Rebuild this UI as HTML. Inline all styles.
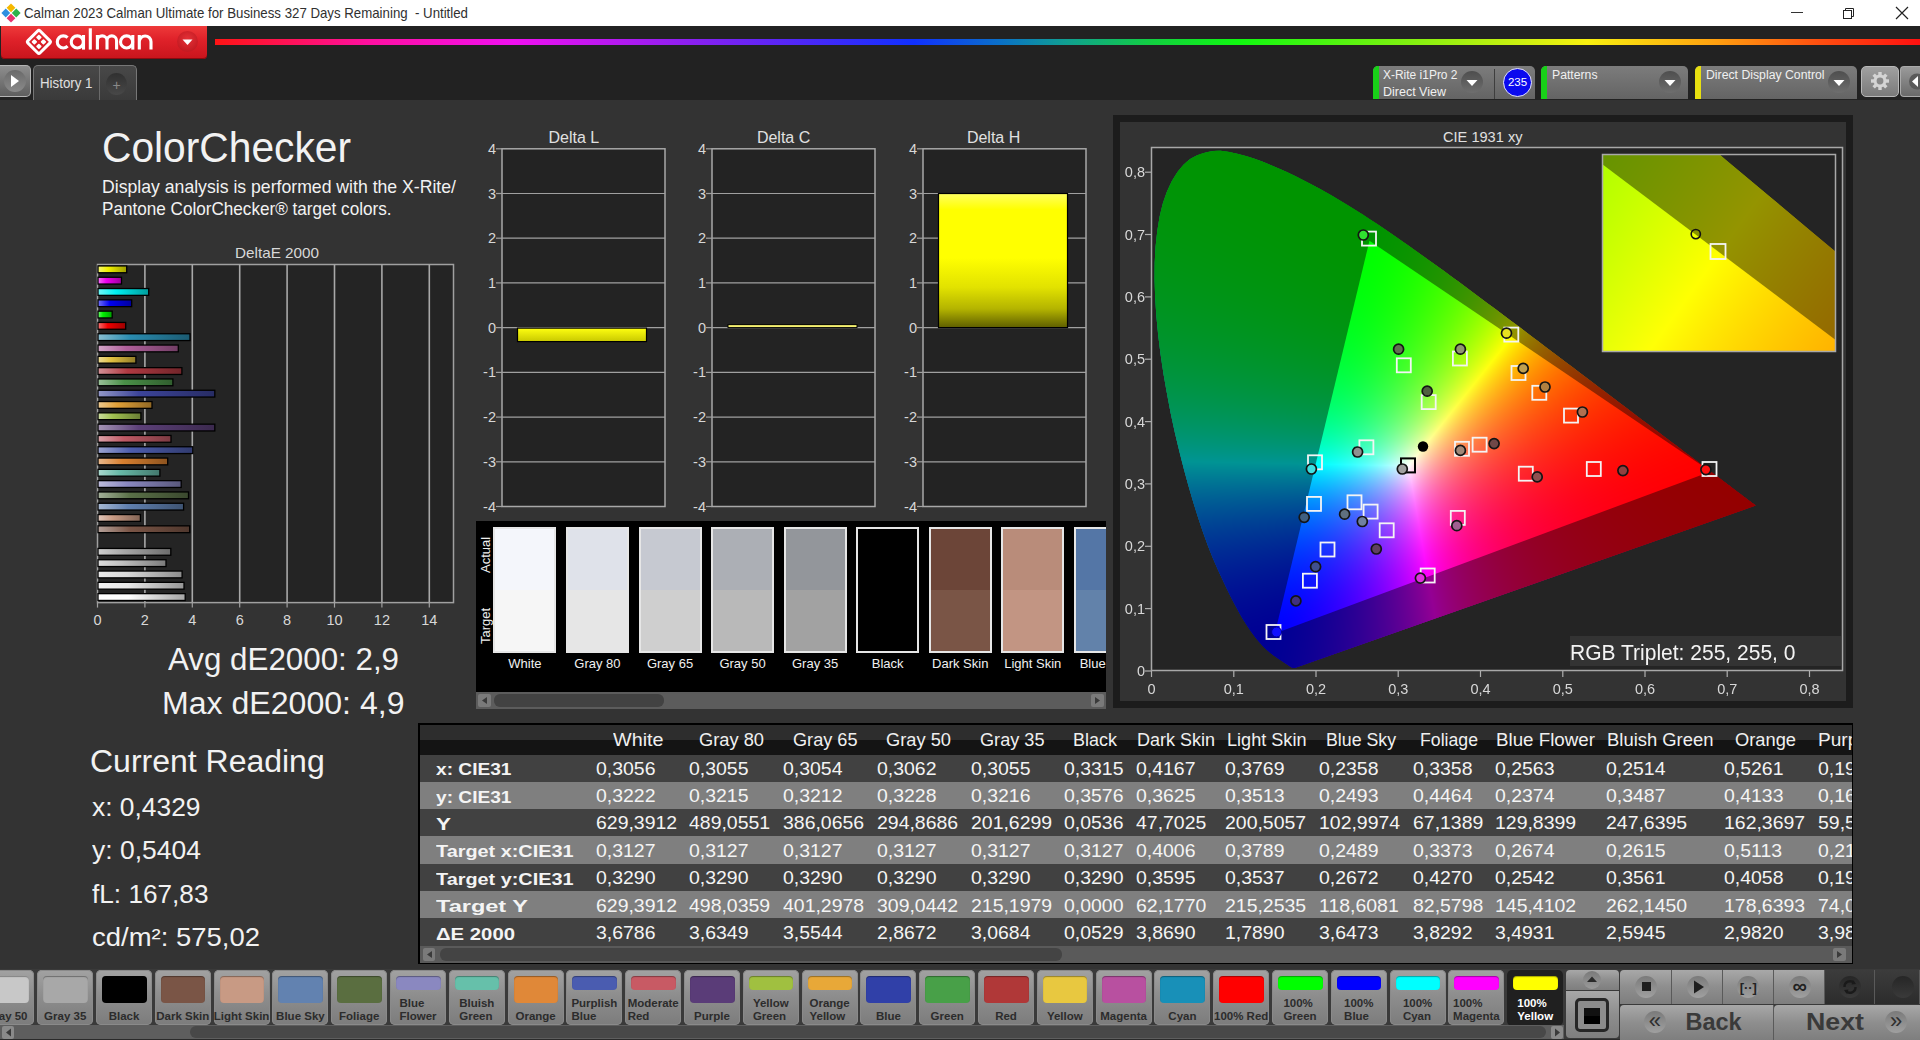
<!DOCTYPE html>
<html><head><meta charset="utf-8"><style>
html,body{margin:0;padding:0;width:1920px;height:1040px;overflow:hidden;background:#333333;}
body{position:relative;font-family:"Liberation Sans",sans-serif;}
.t{position:absolute;white-space:nowrap;}
.r{position:absolute;}
</style></head><body>
<div class="r" style="left:0px;top:0px;width:1920px;height:26px;background:#fff"></div><svg class="r" style="left:1px;top:3px" width="20" height="20" viewBox="0 0 20 20">
<g transform="rotate(45 10 10)">
<rect x="3.2" y="3.2" width="6.2" height="6.2" fill="#f5b800"/>
<rect x="10.6" y="3.2" width="6.2" height="6.2" fill="#2db34a"/>
<rect x="3.2" y="10.6" width="6.2" height="6.2" fill="#2f8fe0"/>
<rect x="10.6" y="10.6" width="6.2" height="6.2" fill="#e8336d"/>
</g></svg><div class="t" style="left:23.50px;top:6.23px;font-size:14.5px;line-height:14.5px;color:#303030;transform:scaleX(0.9136);transform-origin:0 0;white-space:pre;">Calman 2023 Calman Ultimate for Business 327 Days Remaining  - Untitled</div><div class="r" style="left:1791px;top:12px;width:12px;height:1px;background:#333"></div><svg class="r" style="left:1840px;top:5px" width="16" height="16" viewBox="0 0 16 16">
<rect x="3.5" y="5.5" width="8" height="8" fill="none" stroke="#222" stroke-width="1"/>
<path d="M5.5 5.5 V3.5 H13.5 V11.5 H11.5" fill="none" stroke="#222" stroke-width="1"/></svg><svg class="r" style="left:1894px;top:5px" width="16" height="16" viewBox="0 0 16 16">
<path d="M2 2 L14 14 M14 2 L2 14" stroke="#222" stroke-width="1.2"/></svg><div class="r" style="left:0px;top:26px;width:1920px;height:74px;background:#222222"></div><div class="r" style="left:1px;top:26px;width:206px;height:33px;background:linear-gradient(#ee3a3a 0%,#e0222a 40%,#c8141c 100%);border-radius:0 0 4px 4px;box-shadow:inset 0 -1px 0 #8a0a10"></div><svg class="r" style="left:0;top:0" width="60" height="60" viewBox="0 0 60 60">
<g transform="translate(38.9 41.9) rotate(45)">
<rect x="-8.6" y="-8.6" width="17.2" height="17.2" rx="1.8" fill="none" stroke="#fff" stroke-width="3"/>
<rect x="-5.3" y="-5.3" width="4.2" height="4.2" rx="0.8" fill="#fff"/>
<rect x="1.1" y="-5.3" width="4.2" height="4.2" rx="0.8" fill="#fff"/>
<rect x="-5.3" y="1.1" width="4.2" height="4.2" rx="0.8" fill="#fff"/>
<rect x="1.1" y="1.1" width="4.2" height="4.2" rx="0.8" fill="#fff"/>
</g></svg><svg class="r" style="left:0;top:0" width="210" height="62" viewBox="0 0 210 62">
<g fill="none" stroke="#fff" stroke-width="3.1">
<path d="M67.6 37.6 A6.05 6.05 0 1 0 67.6 46.2"/>
<circle cx="77.3" cy="41.9" r="6.05"/><path d="M83.5 35 V49.6"/>
<path d="M90.3 28.3 V49.6"/>
<path d="M97.4 35 V49.6 M97.4 40.7 A4.8 4.8 0 0 1 107 40.7 V49.6 M107 40.7 A4.8 4.8 0 0 1 116.6 40.7 V49.6"/>
<circle cx="126.6" cy="41.9" r="6.05"/><path d="M132.8 35 V49.6"/>
<path d="M139.3 35 V49.6 M139.3 41.8 A5.85 5.85 0 0 1 151 41.8 V49.6"/>
</g></svg><div class="r" style="left:177px;top:31px;width:21px;height:21px;border-radius:50%;background:radial-gradient(circle at 50% 40%,#e53238,#b8121a)"></div><svg class="r" style="left:181px;top:37px" width="13" height="10" viewBox="0 0 13 10"><path d="M1.5 2.5 L11.5 2.5 L6.5 8 Z" fill="#fff"/></svg><div class="r" style="left:215px;top:39px;width:1705px;height:6px;background:linear-gradient(to right,#ff1414 0%,#ff10a0 9%,#f010f0 17.5%,#8a20f0 28%,#1030ff 41%,#0a70c8 46%,#10a090 50%,#12d040 55%,#10f810 60%,#80f010 70%,#f8f010 80.5%,#ffa010 88%,#ff5010 94%,#ff1010 100%)"></div><div class="r" style="left:0px;top:65px;width:31px;height:32px;background:linear-gradient(#8e8e8e,#5e5e5e);border-radius:0 5px 5px 0;border:1.5px solid #b4b4b4;border-left:none;box-sizing:border-box"></div><div class="r" style="left:4px;top:70px;width:22px;height:22px;border-radius:50%;background:linear-gradient(#6a6a6a,#8a8a8a)"></div><svg class="r" style="left:10px;top:74px" width="10" height="14" viewBox="0 0 10 14"><path d="M1 1 L9 7 L1 13 Z" fill="#fff"/></svg><div class="r" style="left:33px;top:65px;width:104px;height:35px;background:linear-gradient(#484848,#3a3a3a);border-radius:5px 5px 0 0;border:1.5px solid #777;border-bottom:none;box-sizing:border-box"></div><div class="r" style="left:98.5px;top:66px;width:1.5px;height:34px;background:#6a6a6a"></div><div class="r" style="left:106px;top:73px;width:21px;height:22px;border-radius:50%;background:linear-gradient(#303030,#484848)"></div><div class="t" style="left:112.41px;top:78.15px;font-size:14px;line-height:14px;color:#8a8a8a;">+</div><div class="t" style="left:40.00px;top:76.23px;font-size:14.5px;line-height:14.5px;color:#e0e0e0;transform:scaleX(0.9177);transform-origin:0 0;">History 1</div><div class="r" style="left:1373px;top:66px;width:162px;height:33px;background:linear-gradient(#7c7c7c,#646464);border-radius:5px 5px 0 0"></div><div class="r" style="left:1373px;top:66px;width:6px;height:33px;background:#18d018;border-radius:5px 0 0 0"></div><div class="r" style="left:1461px;top:71px;width:22px;height:22px;border-radius:50%;background:linear-gradient(#4e4e4e,#6e6e6e)"></div><svg class="r" style="left:1466px;top:79px" width="12" height="8" viewBox="0 0 12 8"><path d="M0.5 1 L11.5 1 L6 7 Z" fill="#fff"/></svg><div class="r" style="left:1494px;top:69px;width:1px;height:30px;background:#3e3e3e"></div><div class="r" style="left:1503px;top:68px;width:29px;height:29px;border-radius:50%;background:#0a0aee;border:1.5px solid #e8e8f8;box-sizing:border-box"></div><div class="t" style="left:1507.91px;top:77.27px;font-size:11.5px;line-height:11.5px;color:#fff;">235</div><div class="t" style="left:1383.00px;top:69.42px;font-size:12.5px;line-height:12.5px;color:#f0f0f0;transform:scaleX(0.9575);transform-origin:0 0;">X-Rite i1Pro 2</div><div class="t" style="left:1383.00px;top:85.92px;font-size:12.5px;line-height:12.5px;color:#f0f0f0;">Direct View</div><div class="r" style="left:1541px;top:66px;width:147px;height:33px;background:linear-gradient(#7c7c7c,#646464);border-radius:5px 5px 0 0"></div><div class="r" style="left:1541px;top:66px;width:6px;height:33px;background:#18d018;border-radius:5px 0 0 0"></div><div class="r" style="left:1659px;top:71px;width:22px;height:22px;border-radius:50%;background:linear-gradient(#4e4e4e,#6e6e6e)"></div><svg class="r" style="left:1664px;top:79px" width="12" height="8" viewBox="0 0 12 8"><path d="M0.5 1 L11.5 1 L6 7 Z" fill="#fff"/></svg><div class="t" style="left:1551.50px;top:69.42px;font-size:12.5px;line-height:12.5px;color:#f0f0f0;transform:scaleX(0.9774);transform-origin:0 0;">Patterns</div><div class="r" style="left:1695px;top:66px;width:162px;height:33px;background:linear-gradient(#7c7c7c,#646464);border-radius:5px 5px 0 0"></div><div class="r" style="left:1695px;top:66px;width:6px;height:33px;background:#e8e010;border-radius:5px 0 0 0"></div><div class="r" style="left:1828px;top:71px;width:22px;height:22px;border-radius:50%;background:linear-gradient(#4e4e4e,#6e6e6e)"></div><svg class="r" style="left:1833px;top:79px" width="12" height="8" viewBox="0 0 12 8"><path d="M0.5 1 L11.5 1 L6 7 Z" fill="#fff"/></svg><div class="t" style="left:1705.50px;top:69.42px;font-size:12.5px;line-height:12.5px;color:#f0f0f0;transform:scaleX(0.9804);transform-origin:0 0;">Direct Display Control</div><div class="r" style="left:1861px;top:66px;width:38px;height:31px;background:linear-gradient(#a0a0a0,#7a7a7a);border-radius:5px;border:1.5px solid #b8b8b8;box-sizing:border-box"></div><svg class="r" style="left:1869px;top:70px" width="22" height="22" viewBox="0 0 22 22">
<g fill="#d4d4d4"><circle cx="11" cy="11" r="6.5"/>
<g id="tooth"><rect x="9.3" y="2" width="3.4" height="4"/></g>
<use href="#tooth" transform="rotate(45 11 11)"/><use href="#tooth" transform="rotate(90 11 11)"/><use href="#tooth" transform="rotate(135 11 11)"/>
<use href="#tooth" transform="rotate(180 11 11)"/><use href="#tooth" transform="rotate(225 11 11)"/><use href="#tooth" transform="rotate(270 11 11)"/><use href="#tooth" transform="rotate(315 11 11)"/>
</g><circle cx="11" cy="11" r="3.4" fill="#8a8a8a"/></svg><div class="r" style="left:1900px;top:66px;width:20px;height:31px;background:linear-gradient(#9a9a9a,#6a6a6a);border-radius:4px 0 0 4px;border:1px solid #aaa;border-right:none;box-sizing:border-box"></div><svg class="r" style="left:1905px;top:73px" width="15" height="17" viewBox="0 0 15 17"><circle cx="12" cy="8.5" r="8" fill="#5a5a5a"/><path d="M13 3 L7 8.5 L13 14 Z" fill="#fff"/></svg><div class="t" style="left:102.00px;top:125.60px;font-size:43px;line-height:43px;color:#f2f2f2;transform:scaleX(0.9472);transform-origin:0 0;">ColorChecker</div><div class="t" style="left:102.00px;top:178.34px;font-size:18.5px;line-height:18.5px;color:#f2f2f2;transform:scaleX(0.9537);transform-origin:0 0;">Display analysis is performed with the X-Rite/</div><div class="t" style="left:102.00px;top:200.34px;font-size:18.5px;line-height:18.5px;color:#f2f2f2;transform:scaleX(0.9253);transform-origin:0 0;">Pantone ColorChecker® target colors.</div><div class="t" style="left:234.50px;top:244.80px;font-size:15px;line-height:15px;color:#d8d8d8;transform:scaleX(1.0174);transform-origin:0 0;">DeltaE 2000</div><svg class="r" style="left:0;top:0" width="470" height="640" viewBox="0 0 470 640"><rect x="97.5" y="264.5" width="356.0" height="338.1" fill="#242424" stroke="#a0a0a0" stroke-width="1.5"/><line x1="144.9" y1="264.5" x2="144.9" y2="602.6" stroke="#a8a8a8" stroke-width="1.6"/><line x1="192.3" y1="264.5" x2="192.3" y2="602.6" stroke="#a8a8a8" stroke-width="1.6"/><line x1="239.7" y1="264.5" x2="239.7" y2="602.6" stroke="#a8a8a8" stroke-width="1.6"/><line x1="287.1" y1="264.5" x2="287.1" y2="602.6" stroke="#a8a8a8" stroke-width="1.6"/><line x1="334.5" y1="264.5" x2="334.5" y2="602.6" stroke="#a8a8a8" stroke-width="1.6"/><line x1="381.9" y1="264.5" x2="381.9" y2="602.6" stroke="#a8a8a8" stroke-width="1.6"/><line x1="429.3" y1="264.5" x2="429.3" y2="602.6" stroke="#a8a8a8" stroke-width="1.6"/><defs><linearGradient id="bg0" x1="0" x2="1" y1="0" y2="0"><stop offset="0" stop-color="#f6f672"/><stop offset="0.35" stop-color="#f0f000"/><stop offset="1" stop-color="#9c9c00"/></linearGradient><linearGradient id="bg1" x1="0" x2="1" y1="0" y2="0"><stop offset="0" stop-color="#f672f6"/><stop offset="0.35" stop-color="#f000f0"/><stop offset="1" stop-color="#9c009c"/></linearGradient><linearGradient id="bg2" x1="0" x2="1" y1="0" y2="0"><stop offset="0" stop-color="#72f6f6"/><stop offset="0.35" stop-color="#00f0f0"/><stop offset="1" stop-color="#009c9c"/></linearGradient><linearGradient id="bg3" x1="0" x2="1" y1="0" y2="0"><stop offset="0" stop-color="#7272f6"/><stop offset="0.35" stop-color="#0000f0"/><stop offset="1" stop-color="#00009c"/></linearGradient><linearGradient id="bg4" x1="0" x2="1" y1="0" y2="0"><stop offset="0" stop-color="#72f672"/><stop offset="0.35" stop-color="#00f000"/><stop offset="1" stop-color="#009c00"/></linearGradient><linearGradient id="bg5" x1="0" x2="1" y1="0" y2="0"><stop offset="0" stop-color="#f67272"/><stop offset="0.35" stop-color="#f00000"/><stop offset="1" stop-color="#9c0000"/></linearGradient><linearGradient id="bg6" x1="0" x2="1" y1="0" y2="0"><stop offset="0" stop-color="#89bfd3"/><stop offset="0.35" stop-color="#2a8cb0"/><stop offset="1" stop-color="#1b5b72"/></linearGradient><linearGradient id="bg7" x1="0" x2="1" y1="0" y2="0"><stop offset="0" stop-color="#d3a7c8"/><stop offset="0.35" stop-color="#b0609c"/><stop offset="1" stop-color="#723e65"/></linearGradient><linearGradient id="bg8" x1="0" x2="1" y1="0" y2="0"><stop offset="0" stop-color="#eddc95"/><stop offset="0.35" stop-color="#e0c040"/><stop offset="1" stop-color="#917c29"/></linearGradient><linearGradient id="bg9" x1="0" x2="1" y1="0" y2="0"><stop offset="0" stop-color="#d39297"/><stop offset="0.35" stop-color="#b03a42"/><stop offset="1" stop-color="#72252a"/></linearGradient><linearGradient id="bg10" x1="0" x2="1" y1="0" y2="0"><stop offset="0" stop-color="#9bc19a"/><stop offset="0.35" stop-color="#4a9048"/><stop offset="1" stop-color="#305d2e"/></linearGradient><linearGradient id="bg11" x1="0" x2="1" y1="0" y2="0"><stop offset="0" stop-color="#9398c7"/><stop offset="0.35" stop-color="#3c449a"/><stop offset="1" stop-color="#272c64"/></linearGradient><linearGradient id="bg12" x1="0" x2="1" y1="0" y2="0"><stop offset="0" stop-color="#edca91"/><stop offset="0.35" stop-color="#e0a038"/><stop offset="1" stop-color="#916824"/></linearGradient><linearGradient id="bg13" x1="0" x2="1" y1="0" y2="0"><stop offset="0" stop-color="#cadc9e"/><stop offset="0.35" stop-color="#a0c050"/><stop offset="1" stop-color="#687c34"/></linearGradient><linearGradient id="bg14" x1="0" x2="1" y1="0" y2="0"><stop offset="0" stop-color="#a595b4"/><stop offset="0.35" stop-color="#5c4078"/><stop offset="1" stop-color="#3b294e"/></linearGradient><linearGradient id="bg15" x1="0" x2="1" y1="0" y2="0"><stop offset="0" stop-color="#dca4aa"/><stop offset="0.35" stop-color="#c05a66"/><stop offset="1" stop-color="#7c3a42"/></linearGradient><linearGradient id="bg16" x1="0" x2="1" y1="0" y2="0"><stop offset="0" stop-color="#9ca5d1"/><stop offset="0.35" stop-color="#4c5cac"/><stop offset="1" stop-color="#313b6f"/></linearGradient><linearGradient id="bg17" x1="0" x2="1" y1="0" y2="0"><stop offset="0" stop-color="#e9b98d"/><stop offset="0.35" stop-color="#d88030"/><stop offset="1" stop-color="#8c531f"/></linearGradient><linearGradient id="bg18" x1="0" x2="1" y1="0" y2="0"><stop offset="0" stop-color="#abd9cf"/><stop offset="0.35" stop-color="#68baa8"/><stop offset="1" stop-color="#43786d"/></linearGradient><linearGradient id="bg19" x1="0" x2="1" y1="0" y2="0"><stop offset="0" stop-color="#bebddc"/><stop offset="0.35" stop-color="#8a88c0"/><stop offset="1" stop-color="#59587c"/></linearGradient><linearGradient id="bg20" x1="0" x2="1" y1="0" y2="0"><stop offset="0" stop-color="#a4b09a"/><stop offset="0.35" stop-color="#5a7048"/><stop offset="1" stop-color="#3a482e"/></linearGradient><linearGradient id="bg21" x1="0" x2="1" y1="0" y2="0"><stop offset="0" stop-color="#a7b9d3"/><stop offset="0.35" stop-color="#6080b0"/><stop offset="1" stop-color="#3e5372"/></linearGradient><linearGradient id="bg22" x1="0" x2="1" y1="0" y2="0"><stop offset="0" stop-color="#e0c7bb"/><stop offset="0.35" stop-color="#c89a84"/><stop offset="1" stop-color="#826455"/></linearGradient><linearGradient id="bg23" x1="0" x2="1" y1="0" y2="0"><stop offset="0" stop-color="#b5a199"/><stop offset="0.35" stop-color="#7a5546"/><stop offset="1" stop-color="#4f372d"/></linearGradient><linearGradient id="bg24" x1="0" x2="1" y1="0" y2="0"><stop offset="0" stop-color="#727272"/><stop offset="0.35" stop-color="#000000"/><stop offset="1" stop-color="#000000"/></linearGradient><linearGradient id="bg25" x1="0" x2="1" y1="0" y2="0"><stop offset="0" stop-color="#cfcfcf"/><stop offset="0.35" stop-color="#a8a8a8"/><stop offset="1" stop-color="#6d6d6d"/></linearGradient><linearGradient id="bg26" x1="0" x2="1" y1="0" y2="0"><stop offset="0" stop-color="#dcdcdc"/><stop offset="0.35" stop-color="#c0c0c0"/><stop offset="1" stop-color="#7c7c7c"/></linearGradient><linearGradient id="bg27" x1="0" x2="1" y1="0" y2="0"><stop offset="0" stop-color="#e9e9e9"/><stop offset="0.35" stop-color="#d8d8d8"/><stop offset="1" stop-color="#8c8c8c"/></linearGradient><linearGradient id="bg28" x1="0" x2="1" y1="0" y2="0"><stop offset="0" stop-color="#f2f2f2"/><stop offset="0.35" stop-color="#e8e8e8"/><stop offset="1" stop-color="#969696"/></linearGradient><linearGradient id="bg29" x1="0" x2="1" y1="0" y2="0"><stop offset="0" stop-color="#ffffff"/><stop offset="0.35" stop-color="#ffffff"/><stop offset="1" stop-color="#a5a5a5"/></linearGradient></defs><rect x="98.0" y="265.95" width="28.7" height="6.8" fill="url(#bg0)" stroke="#000" stroke-width="1.3"/><rect x="98.0" y="277.25" width="23.5" height="6.8" fill="url(#bg1)" stroke="#000" stroke-width="1.3"/><rect x="98.0" y="288.55" width="50.7" height="6.8" fill="url(#bg2)" stroke="#000" stroke-width="1.3"/><rect x="98.0" y="299.85" width="33.7" height="6.8" fill="url(#bg3)" stroke="#000" stroke-width="1.3"/><rect x="98.0" y="311.15" width="14.2" height="6.8" fill="url(#bg4)" stroke="#000" stroke-width="1.3"/><rect x="98.0" y="322.45" width="27.7" height="6.8" fill="url(#bg5)" stroke="#000" stroke-width="1.3"/><rect x="98.0" y="333.75" width="92.0" height="6.8" fill="url(#bg6)" stroke="#000" stroke-width="1.3"/><rect x="98.0" y="345.05" width="80.3" height="6.8" fill="url(#bg7)" stroke="#000" stroke-width="1.3"/><rect x="98.0" y="356.35" width="37.9" height="6.8" fill="url(#bg8)" stroke="#000" stroke-width="1.3"/><rect x="98.0" y="367.65" width="83.9" height="6.8" fill="url(#bg9)" stroke="#000" stroke-width="1.3"/><rect x="98.0" y="378.95" width="74.9" height="6.8" fill="url(#bg10)" stroke="#000" stroke-width="1.3"/><rect x="98.0" y="390.25" width="116.8" height="6.8" fill="url(#bg11)" stroke="#000" stroke-width="1.3"/><rect x="98.0" y="401.55" width="54.0" height="6.8" fill="url(#bg12)" stroke="#000" stroke-width="1.3"/><rect x="98.0" y="412.85" width="42.9" height="6.8" fill="url(#bg13)" stroke="#000" stroke-width="1.3"/><rect x="98.0" y="424.15" width="116.8" height="6.8" fill="url(#bg14)" stroke="#000" stroke-width="1.3"/><rect x="98.0" y="435.45" width="73.0" height="6.8" fill="url(#bg15)" stroke="#000" stroke-width="1.3"/><rect x="98.0" y="446.75" width="94.8" height="6.8" fill="url(#bg16)" stroke="#000" stroke-width="1.3"/><rect x="98.0" y="458.05" width="69.7" height="6.8" fill="url(#bg17)" stroke="#000" stroke-width="1.3"/><rect x="98.0" y="469.35" width="61.9" height="6.8" fill="url(#bg18)" stroke="#000" stroke-width="1.3"/><rect x="98.0" y="480.65" width="83.2" height="6.8" fill="url(#bg19)" stroke="#000" stroke-width="1.3"/><rect x="98.0" y="491.95" width="90.5" height="6.8" fill="url(#bg20)" stroke="#000" stroke-width="1.3"/><rect x="98.0" y="503.25" width="85.6" height="6.8" fill="url(#bg21)" stroke="#000" stroke-width="1.3"/><rect x="98.0" y="514.55" width="42.4" height="6.8" fill="url(#bg22)" stroke="#000" stroke-width="1.3"/><rect x="98.0" y="525.85" width="91.7" height="6.8" fill="url(#bg23)" stroke="#000" stroke-width="1.3"/><rect x="98.0" y="548.45" width="72.8" height="6.8" fill="url(#bg25)" stroke="#000" stroke-width="1.3"/><rect x="98.0" y="559.75" width="68.0" height="6.8" fill="url(#bg26)" stroke="#000" stroke-width="1.3"/><rect x="98.0" y="571.05" width="84.1" height="6.8" fill="url(#bg27)" stroke="#000" stroke-width="1.3"/><rect x="98.0" y="582.35" width="86.0" height="6.8" fill="url(#bg28)" stroke="#000" stroke-width="1.3"/><rect x="98.0" y="593.65" width="87.2" height="6.8" fill="url(#bg29)" stroke="#000" stroke-width="1.3"/><line x1="97.5" y1="602.6" x2="97.5" y2="607.6" stroke="#a0a0a0" stroke-width="1.2"/><line x1="144.9" y1="602.6" x2="144.9" y2="607.6" stroke="#a0a0a0" stroke-width="1.2"/><line x1="192.3" y1="602.6" x2="192.3" y2="607.6" stroke="#a0a0a0" stroke-width="1.2"/><line x1="239.7" y1="602.6" x2="239.7" y2="607.6" stroke="#a0a0a0" stroke-width="1.2"/><line x1="287.1" y1="602.6" x2="287.1" y2="607.6" stroke="#a0a0a0" stroke-width="1.2"/><line x1="334.5" y1="602.6" x2="334.5" y2="607.6" stroke="#a0a0a0" stroke-width="1.2"/><line x1="381.9" y1="602.6" x2="381.9" y2="607.6" stroke="#a0a0a0" stroke-width="1.2"/><line x1="429.3" y1="602.6" x2="429.3" y2="607.6" stroke="#a0a0a0" stroke-width="1.2"/></svg><div class="t" style="left:93.47px;top:613.23px;font-size:14.5px;line-height:14.5px;color:#d8d8d8;">0</div><div class="t" style="left:140.87px;top:613.23px;font-size:14.5px;line-height:14.5px;color:#d8d8d8;">2</div><div class="t" style="left:188.27px;top:613.23px;font-size:14.5px;line-height:14.5px;color:#d8d8d8;">4</div><div class="t" style="left:235.67px;top:613.23px;font-size:14.5px;line-height:14.5px;color:#d8d8d8;">6</div><div class="t" style="left:283.07px;top:613.23px;font-size:14.5px;line-height:14.5px;color:#d8d8d8;">8</div><div class="t" style="left:326.44px;top:613.23px;font-size:14.5px;line-height:14.5px;color:#d8d8d8;">10</div><div class="t" style="left:373.84px;top:613.23px;font-size:14.5px;line-height:14.5px;color:#d8d8d8;">12</div><div class="t" style="left:421.24px;top:613.23px;font-size:14.5px;line-height:14.5px;color:#d8d8d8;">14</div><div class="t" style="left:167.50px;top:644.26px;font-size:31px;line-height:31px;color:#f2f2f2;transform:scaleX(1.0102);transform-origin:0 0;">Avg dE2000: 2,9</div><div class="t" style="left:161.50px;top:688.26px;font-size:31px;line-height:31px;color:#f2f2f2;transform:scaleX(1.0346);transform-origin:0 0;">Max dE2000: 4,9</div><div class="t" style="left:90.00px;top:745.76px;font-size:31px;line-height:31px;color:#f2f2f2;transform:scaleX(1.0318);transform-origin:0 0;">Current Reading</div><div class="t" style="left:92.00px;top:795.04px;font-size:25px;line-height:25px;color:#f2f2f2;transform:scaleX(1.0549);transform-origin:0 0;">x: 0,4329</div><div class="t" style="left:92.00px;top:838.44px;font-size:25px;line-height:25px;color:#f2f2f2;transform:scaleX(1.0597);transform-origin:0 0;">y: 0,5404</div><div class="t" style="left:92.00px;top:881.54px;font-size:25px;line-height:25px;color:#f2f2f2;transform:scaleX(1.0476);transform-origin:0 0;">fL: 167,83</div><div class="t" style="left:92.00px;top:925.34px;font-size:25px;line-height:25px;color:#f2f2f2;transform:scaleX(1.0990);transform-origin:0 0;">cd/m²: 575,02</div><svg class="r" style="left:0;top:0" width="1110" height="520" viewBox="0 0 1110 520"><defs><linearGradient id="ylL" x1="0" x2="0" y1="0" y2="1"><stop offset="0" stop-color="#ffff10"/><stop offset="1" stop-color="#c8c800"/></linearGradient><linearGradient id="ylH" x1="0" x2="0" y1="0" y2="1"><stop offset="0" stop-color="#ffff60"/><stop offset="0.12" stop-color="#ffff00"/><stop offset="0.48" stop-color="#ffff00"/><stop offset="0.7" stop-color="#e2e200"/><stop offset="0.86" stop-color="#b4b400"/><stop offset="1" stop-color="#5e5e00"/></linearGradient></defs><rect x="502" y="148.8" width="163" height="357.7" fill="#232323" stroke="#a8a8a8" stroke-width="1.5"/><line x1="502" y1="193.5" x2="665" y2="193.5" stroke="#a0a0a0" stroke-width="1.2"/><line x1="502" y1="238.2" x2="665" y2="238.2" stroke="#a0a0a0" stroke-width="1.2"/><line x1="502" y1="282.9" x2="665" y2="282.9" stroke="#a0a0a0" stroke-width="1.2"/><line x1="502" y1="327.6" x2="665" y2="327.6" stroke="#a0a0a0" stroke-width="1.2"/><line x1="502" y1="372.4" x2="665" y2="372.4" stroke="#a0a0a0" stroke-width="1.2"/><line x1="502" y1="417.1" x2="665" y2="417.1" stroke="#a0a0a0" stroke-width="1.2"/><line x1="502" y1="461.8" x2="665" y2="461.8" stroke="#a0a0a0" stroke-width="1.2"/><line x1="496" y1="148.8" x2="502" y2="148.8" stroke="#a0a0a0" stroke-width="1.2"/><line x1="496" y1="193.5" x2="502" y2="193.5" stroke="#a0a0a0" stroke-width="1.2"/><line x1="496" y1="238.2" x2="502" y2="238.2" stroke="#a0a0a0" stroke-width="1.2"/><line x1="496" y1="282.9" x2="502" y2="282.9" stroke="#a0a0a0" stroke-width="1.2"/><line x1="496" y1="327.6" x2="502" y2="327.6" stroke="#a0a0a0" stroke-width="1.2"/><line x1="496" y1="372.4" x2="502" y2="372.4" stroke="#a0a0a0" stroke-width="1.2"/><line x1="496" y1="417.1" x2="502" y2="417.1" stroke="#a0a0a0" stroke-width="1.2"/><line x1="496" y1="461.8" x2="502" y2="461.8" stroke="#a0a0a0" stroke-width="1.2"/><line x1="496" y1="506.5" x2="502" y2="506.5" stroke="#a0a0a0" stroke-width="1.2"/><rect x="712" y="148.8" width="163" height="357.7" fill="#232323" stroke="#a8a8a8" stroke-width="1.5"/><line x1="712" y1="193.5" x2="875" y2="193.5" stroke="#a0a0a0" stroke-width="1.2"/><line x1="712" y1="238.2" x2="875" y2="238.2" stroke="#a0a0a0" stroke-width="1.2"/><line x1="712" y1="282.9" x2="875" y2="282.9" stroke="#a0a0a0" stroke-width="1.2"/><line x1="712" y1="327.6" x2="875" y2="327.6" stroke="#a0a0a0" stroke-width="1.2"/><line x1="712" y1="372.4" x2="875" y2="372.4" stroke="#a0a0a0" stroke-width="1.2"/><line x1="712" y1="417.1" x2="875" y2="417.1" stroke="#a0a0a0" stroke-width="1.2"/><line x1="712" y1="461.8" x2="875" y2="461.8" stroke="#a0a0a0" stroke-width="1.2"/><line x1="706" y1="148.8" x2="712" y2="148.8" stroke="#a0a0a0" stroke-width="1.2"/><line x1="706" y1="193.5" x2="712" y2="193.5" stroke="#a0a0a0" stroke-width="1.2"/><line x1="706" y1="238.2" x2="712" y2="238.2" stroke="#a0a0a0" stroke-width="1.2"/><line x1="706" y1="282.9" x2="712" y2="282.9" stroke="#a0a0a0" stroke-width="1.2"/><line x1="706" y1="327.6" x2="712" y2="327.6" stroke="#a0a0a0" stroke-width="1.2"/><line x1="706" y1="372.4" x2="712" y2="372.4" stroke="#a0a0a0" stroke-width="1.2"/><line x1="706" y1="417.1" x2="712" y2="417.1" stroke="#a0a0a0" stroke-width="1.2"/><line x1="706" y1="461.8" x2="712" y2="461.8" stroke="#a0a0a0" stroke-width="1.2"/><line x1="706" y1="506.5" x2="712" y2="506.5" stroke="#a0a0a0" stroke-width="1.2"/><rect x="923" y="148.8" width="163" height="357.7" fill="#232323" stroke="#a8a8a8" stroke-width="1.5"/><line x1="923" y1="193.5" x2="1086" y2="193.5" stroke="#a0a0a0" stroke-width="1.2"/><line x1="923" y1="238.2" x2="1086" y2="238.2" stroke="#a0a0a0" stroke-width="1.2"/><line x1="923" y1="282.9" x2="1086" y2="282.9" stroke="#a0a0a0" stroke-width="1.2"/><line x1="923" y1="327.6" x2="1086" y2="327.6" stroke="#a0a0a0" stroke-width="1.2"/><line x1="923" y1="372.4" x2="1086" y2="372.4" stroke="#a0a0a0" stroke-width="1.2"/><line x1="923" y1="417.1" x2="1086" y2="417.1" stroke="#a0a0a0" stroke-width="1.2"/><line x1="923" y1="461.8" x2="1086" y2="461.8" stroke="#a0a0a0" stroke-width="1.2"/><line x1="917" y1="148.8" x2="923" y2="148.8" stroke="#a0a0a0" stroke-width="1.2"/><line x1="917" y1="193.5" x2="923" y2="193.5" stroke="#a0a0a0" stroke-width="1.2"/><line x1="917" y1="238.2" x2="923" y2="238.2" stroke="#a0a0a0" stroke-width="1.2"/><line x1="917" y1="282.9" x2="923" y2="282.9" stroke="#a0a0a0" stroke-width="1.2"/><line x1="917" y1="327.6" x2="923" y2="327.6" stroke="#a0a0a0" stroke-width="1.2"/><line x1="917" y1="372.4" x2="923" y2="372.4" stroke="#a0a0a0" stroke-width="1.2"/><line x1="917" y1="417.1" x2="923" y2="417.1" stroke="#a0a0a0" stroke-width="1.2"/><line x1="917" y1="461.8" x2="923" y2="461.8" stroke="#a0a0a0" stroke-width="1.2"/><line x1="917" y1="506.5" x2="923" y2="506.5" stroke="#a0a0a0" stroke-width="1.2"/><rect x="517.5" y="328.1" width="129" height="13.5" fill="url(#ylL)" stroke="#000" stroke-width="1.2"/><rect x="728" y="324.6" width="129" height="3" fill="#f4f070" stroke="#000" stroke-width="1"/><rect x="938.5" y="193.5" width="129" height="134.1" fill="url(#ylH)" stroke="#000" stroke-width="1.2"/></svg><div class="t" style="left:548.55px;top:129.96px;font-size:16px;line-height:16px;color:#e0e0e0;">Delta L</div><div class="t" style="left:487.94px;top:141.83px;font-size:14.5px;line-height:14.5px;color:#d8d8d8;">4</div><div class="t" style="left:487.94px;top:186.54px;font-size:14.5px;line-height:14.5px;color:#d8d8d8;">3</div><div class="t" style="left:487.94px;top:231.25px;font-size:14.5px;line-height:14.5px;color:#d8d8d8;">2</div><div class="t" style="left:487.94px;top:275.96px;font-size:14.5px;line-height:14.5px;color:#d8d8d8;">1</div><div class="t" style="left:487.94px;top:320.68px;font-size:14.5px;line-height:14.5px;color:#d8d8d8;">0</div><div class="t" style="left:483.11px;top:365.39px;font-size:14.5px;line-height:14.5px;color:#d8d8d8;">-1</div><div class="t" style="left:483.11px;top:410.10px;font-size:14.5px;line-height:14.5px;color:#d8d8d8;">-2</div><div class="t" style="left:483.11px;top:454.81px;font-size:14.5px;line-height:14.5px;color:#d8d8d8;">-3</div><div class="t" style="left:483.11px;top:499.53px;font-size:14.5px;line-height:14.5px;color:#d8d8d8;">-4</div><div class="t" style="left:756.92px;top:129.96px;font-size:16px;line-height:16px;color:#e0e0e0;">Delta C</div><div class="t" style="left:697.94px;top:141.83px;font-size:14.5px;line-height:14.5px;color:#d8d8d8;">4</div><div class="t" style="left:697.94px;top:186.54px;font-size:14.5px;line-height:14.5px;color:#d8d8d8;">3</div><div class="t" style="left:697.94px;top:231.25px;font-size:14.5px;line-height:14.5px;color:#d8d8d8;">2</div><div class="t" style="left:697.94px;top:275.96px;font-size:14.5px;line-height:14.5px;color:#d8d8d8;">1</div><div class="t" style="left:697.94px;top:320.68px;font-size:14.5px;line-height:14.5px;color:#d8d8d8;">0</div><div class="t" style="left:693.11px;top:365.39px;font-size:14.5px;line-height:14.5px;color:#d8d8d8;">-1</div><div class="t" style="left:693.11px;top:410.10px;font-size:14.5px;line-height:14.5px;color:#d8d8d8;">-2</div><div class="t" style="left:693.11px;top:454.81px;font-size:14.5px;line-height:14.5px;color:#d8d8d8;">-3</div><div class="t" style="left:693.11px;top:499.53px;font-size:14.5px;line-height:14.5px;color:#d8d8d8;">-4</div><div class="t" style="left:966.92px;top:129.96px;font-size:16px;line-height:16px;color:#e0e0e0;">Delta H</div><div class="t" style="left:908.94px;top:141.83px;font-size:14.5px;line-height:14.5px;color:#d8d8d8;">4</div><div class="t" style="left:908.94px;top:186.54px;font-size:14.5px;line-height:14.5px;color:#d8d8d8;">3</div><div class="t" style="left:908.94px;top:231.25px;font-size:14.5px;line-height:14.5px;color:#d8d8d8;">2</div><div class="t" style="left:908.94px;top:275.96px;font-size:14.5px;line-height:14.5px;color:#d8d8d8;">1</div><div class="t" style="left:908.94px;top:320.68px;font-size:14.5px;line-height:14.5px;color:#d8d8d8;">0</div><div class="t" style="left:904.11px;top:365.39px;font-size:14.5px;line-height:14.5px;color:#d8d8d8;">-1</div><div class="t" style="left:904.11px;top:410.10px;font-size:14.5px;line-height:14.5px;color:#d8d8d8;">-2</div><div class="t" style="left:904.11px;top:454.81px;font-size:14.5px;line-height:14.5px;color:#d8d8d8;">-3</div><div class="t" style="left:904.11px;top:499.53px;font-size:14.5px;line-height:14.5px;color:#d8d8d8;">-4</div><div class="r" style="left:476px;top:521px;width:630px;height:171px;background:#000"></div><div class="t" style="left:0.00px;top:-11.00px;font-size:13px;line-height:13px;color:#f0f0f0;left:468px;top:548px;transform:rotate(-90deg);transform-origin:18px 7px;">Actual</div><div class="t" style="left:0.00px;top:-11.00px;font-size:13px;line-height:13px;color:#f0f0f0;left:467px;top:617.5px;transform:rotate(-90deg);transform-origin:19px 7px;">Target</div><div class="r" style="left:493.4px;top:527px;width:63.0px;height:125.5px;overflow:hidden"><div class="r" style="left:0;top:0;width:63px;height:125.5px;box-sizing:border-box;border:2px solid #e6e6e6;background:linear-gradient(#f4f6fb 0,#f4f6fb 50%,#f6f6f6 50%,#f6f6f6 100%)"></div></div><div class="t" style="left:508.28px;top:657.30px;font-size:13px;line-height:13px;color:#f0f0f0;">White</div><div class="r" style="left:565.9px;top:527px;width:63.0px;height:125.5px;overflow:hidden"><div class="r" style="left:0;top:0;width:63px;height:125.5px;box-sizing:border-box;border:2px solid #e6e6e6;background:linear-gradient(#dfe2ea 0,#dfe2ea 50%,#e6e6e6 50%,#e6e6e6 100%)"></div></div><div class="t" style="left:574.33px;top:657.30px;font-size:13px;line-height:13px;color:#f0f0f0;">Gray 80</div><div class="r" style="left:638.5px;top:527px;width:63.0px;height:125.5px;overflow:hidden"><div class="r" style="left:0;top:0;width:63px;height:125.5px;box-sizing:border-box;border:2px solid #e6e6e6;background:linear-gradient(#c6c9d1 0,#c6c9d1 50%,#cfcfcf 50%,#cfcfcf 100%)"></div></div><div class="t" style="left:646.88px;top:657.30px;font-size:13px;line-height:13px;color:#f0f0f0;">Gray 65</div><div class="r" style="left:711.0px;top:527px;width:63.0px;height:125.5px;overflow:hidden"><div class="r" style="left:0;top:0;width:63px;height:125.5px;box-sizing:border-box;border:2px solid #e6e6e6;background:linear-gradient(#acafb5 0,#acafb5 50%,#b9b9b9 50%,#b9b9b9 100%)"></div></div><div class="t" style="left:719.43px;top:657.30px;font-size:13px;line-height:13px;color:#f0f0f0;">Gray 50</div><div class="r" style="left:783.6px;top:527px;width:63.0px;height:125.5px;overflow:hidden"><div class="r" style="left:0;top:0;width:63px;height:125.5px;box-sizing:border-box;border:2px solid #e6e6e6;background:linear-gradient(#93969b 0,#93969b 50%,#a2a2a2 50%,#a2a2a2 100%)"></div></div><div class="t" style="left:791.98px;top:657.30px;font-size:13px;line-height:13px;color:#f0f0f0;">Gray 35</div><div class="r" style="left:856.1px;top:527px;width:63.0px;height:125.5px;overflow:hidden"><div class="r" style="left:0;top:0;width:63px;height:125.5px;box-sizing:border-box;border:2px solid #e6e6e6;background:linear-gradient(#000000 0,#000000 50%,#000000 50%,#000000 100%)"></div></div><div class="t" style="left:871.75px;top:657.30px;font-size:13px;line-height:13px;color:#f0f0f0;">Black</div><div class="r" style="left:928.7px;top:527px;width:63.0px;height:125.5px;overflow:hidden"><div class="r" style="left:0;top:0;width:63px;height:125.5px;box-sizing:border-box;border:2px solid #e6e6e6;background:linear-gradient(#6c4538 0,#6c4538 50%,#7a5546 50%,#7a5546 100%)"></div></div><div class="t" style="left:932.03px;top:657.30px;font-size:13px;line-height:13px;color:#f0f0f0;">Dark Skin</div><div class="r" style="left:1001.2px;top:527px;width:63.0px;height:125.5px;overflow:hidden"><div class="r" style="left:0;top:0;width:63px;height:125.5px;box-sizing:border-box;border:2px solid #e6e6e6;background:linear-gradient(#b98c7a 0,#b98c7a 50%,#c29583 50%,#c29583 100%)"></div></div><div class="t" style="left:1004.20px;top:657.30px;font-size:13px;line-height:13px;color:#f0f0f0;">Light Skin</div><div class="r" style="left:1073.8px;top:527px;width:32.2px;height:125.5px;overflow:hidden"><div class="r" style="left:0;top:0;width:63px;height:125.5px;box-sizing:border-box;border:2px solid #e6e6e6;background:linear-gradient(#5476a6 0,#5476a6 50%,#6282aa 50%,#6282aa 100%)"></div></div><div class="r" style="left:1073.8px;top:650px;width:32.2px;height:30px;overflow:hidden"><div class="t" style="left:5.85px;top:7.00px;font-size:13px;line-height:13px;color:#f0f0f0;">Blue Sky</div></div><div class="r" style="left:476px;top:692px;width:630px;height:17px;background:#5c5c5c"></div><div class="r" style="left:478px;top:694px;width:13px;height:13px;background:#7a7a7a;border-radius:2px"></div><svg class="r" style="left:480px;top:696px" width="9" height="9" viewBox="0 0 9 9"><path d="M7 1 L2 4.5 L7 8 Z" fill="#3a3a3a"/></svg><div class="r" style="left:494px;top:694px;width:170px;height:13px;background:#424242;border-radius:6px"></div><div class="r" style="left:1091px;top:694px;width:13px;height:13px;background:#7a7a7a;border-radius:2px"></div><svg class="r" style="left:1093px;top:696px" width="9" height="9" viewBox="0 0 9 9"><path d="M2 1 L7 4.5 L2 8 Z" fill="#3a3a3a"/></svg><div class="r" style="left:418px;top:723px;width:1435px;height:241px;background:#000"></div><div class="r" style="left:420px;top:725px;width:1432px;height:238px;overflow:hidden"><div class="r" style="left:0px;top:0px;width:1432px;height:15px;background:#2d2d2d"></div><div class="r" style="left:0px;top:15px;width:1432px;height:15px;background:#141414"></div><div class="r" style="left:0;top:29.5px;width:1432px;height:27.3px;background:#414141"></div><div class="r" style="left:0;top:56.8px;width:1432px;height:27.3px;background:#7f7f7f"></div><div class="r" style="left:0;top:84.1px;width:1432px;height:27.3px;background:#414141"></div><div class="r" style="left:0;top:111.4px;width:1432px;height:27.3px;background:#7f7f7f"></div><div class="r" style="left:0;top:138.7px;width:1432px;height:27.3px;background:#414141"></div><div class="r" style="left:0;top:166.0px;width:1432px;height:27.3px;background:#7f7f7f"></div><div class="r" style="left:0;top:193.3px;width:1432px;height:27.3px;background:#414141"></div><div class="t" style="left:192.75px;top:7.09px;font-size:17.5px;line-height:17.5px;color:#f0f0f0;transform:scaleX(1.1289);transform-origin:0 0;">White</div><div class="t" style="left:278.50px;top:7.09px;font-size:17.5px;line-height:17.5px;color:#f0f0f0;transform:scaleX(1.0442);transform-origin:0 0;">Gray 80</div><div class="t" style="left:372.75px;top:7.09px;font-size:17.5px;line-height:17.5px;color:#f0f0f0;transform:scaleX(1.0361);transform-origin:0 0;">Gray 65</div><div class="t" style="left:466.00px;top:7.09px;font-size:17.5px;line-height:17.5px;color:#f0f0f0;transform:scaleX(1.0442);transform-origin:0 0;">Gray 50</div><div class="t" style="left:559.75px;top:7.09px;font-size:17.5px;line-height:17.5px;color:#f0f0f0;transform:scaleX(1.0361);transform-origin:0 0;">Gray 35</div><div class="t" style="left:653.00px;top:7.09px;font-size:17.5px;line-height:17.5px;color:#f0f0f0;transform:scaleX(1.0282);transform-origin:0 0;">Black</div><div class="t" style="left:716.60px;top:7.09px;font-size:17.5px;line-height:17.5px;color:#f0f0f0;transform:scaleX(1.0283);transform-origin:0 0;">Dark Skin</div><div class="t" style="left:807.25px;top:7.09px;font-size:17.5px;line-height:17.5px;color:#f0f0f0;transform:scaleX(1.0344);transform-origin:0 0;">Light Skin</div><div class="t" style="left:906.00px;top:7.09px;font-size:17.5px;line-height:17.5px;color:#f0f0f0;transform:scaleX(1.0136);transform-origin:0 0;">Blue Sky</div><div class="t" style="left:1000.00px;top:7.09px;font-size:17.5px;line-height:17.5px;color:#f0f0f0;transform:scaleX(1.0105);transform-origin:0 0;">Foliage</div><div class="t" style="left:1076.00px;top:7.09px;font-size:17.5px;line-height:17.5px;color:#f0f0f0;transform:scaleX(1.0714);transform-origin:0 0;">Blue Flower</div><div class="t" style="left:1186.75px;top:7.09px;font-size:17.5px;line-height:17.5px;color:#f0f0f0;transform:scaleX(1.0527);transform-origin:0 0;">Bluish Green</div><div class="t" style="left:1315.10px;top:7.09px;font-size:17.5px;line-height:17.5px;color:#f0f0f0;transform:scaleX(1.0450);transform-origin:0 0;">Orange</div><div class="t" style="left:1398.00px;top:7.09px;font-size:17.5px;line-height:17.5px;color:#f0f0f0;transform:scaleX(1.09);transform-origin:0 0;">Purple</div><div class="t" style="left:15.50px;top:36.31px;font-size:17px;line-height:17px;color:#f4f4f4;font-weight:bold;transform:scaleX(1.1254);transform-origin:0 0;">x: CIE31</div><div class="t" style="left:176.40px;top:35.72px;font-size:17.7px;line-height:17.7px;color:#f4f4f4;transform:scaleX(1.1);transform-origin:0 0;">0,3056</div><div class="t" style="left:269.40px;top:35.72px;font-size:17.7px;line-height:17.7px;color:#f4f4f4;transform:scaleX(1.1);transform-origin:0 0;">0,3055</div><div class="t" style="left:363.00px;top:35.72px;font-size:17.7px;line-height:17.7px;color:#f4f4f4;transform:scaleX(1.1);transform-origin:0 0;">0,3054</div><div class="t" style="left:456.80px;top:35.72px;font-size:17.7px;line-height:17.7px;color:#f4f4f4;transform:scaleX(1.1);transform-origin:0 0;">0,3062</div><div class="t" style="left:550.60px;top:35.72px;font-size:17.7px;line-height:17.7px;color:#f4f4f4;transform:scaleX(1.1);transform-origin:0 0;">0,3055</div><div class="t" style="left:644.40px;top:35.72px;font-size:17.7px;line-height:17.7px;color:#f4f4f4;transform:scaleX(1.1);transform-origin:0 0;">0,3315</div><div class="t" style="left:715.80px;top:35.72px;font-size:17.7px;line-height:17.7px;color:#f4f4f4;transform:scaleX(1.1);transform-origin:0 0;">0,4167</div><div class="t" style="left:805.40px;top:35.72px;font-size:17.7px;line-height:17.7px;color:#f4f4f4;transform:scaleX(1.1);transform-origin:0 0;">0,3769</div><div class="t" style="left:899.20px;top:35.72px;font-size:17.7px;line-height:17.7px;color:#f4f4f4;transform:scaleX(1.1);transform-origin:0 0;">0,2358</div><div class="t" style="left:992.90px;top:35.72px;font-size:17.7px;line-height:17.7px;color:#f4f4f4;transform:scaleX(1.1);transform-origin:0 0;">0,3358</div><div class="t" style="left:1075.40px;top:35.72px;font-size:17.7px;line-height:17.7px;color:#f4f4f4;transform:scaleX(1.1);transform-origin:0 0;">0,2563</div><div class="t" style="left:1185.80px;top:35.72px;font-size:17.7px;line-height:17.7px;color:#f4f4f4;transform:scaleX(1.1);transform-origin:0 0;">0,2514</div><div class="t" style="left:1304.20px;top:35.72px;font-size:17.7px;line-height:17.7px;color:#f4f4f4;transform:scaleX(1.1);transform-origin:0 0;">0,5261</div><div class="t" style="left:1398.00px;top:35.72px;font-size:17.7px;line-height:17.7px;color:#f4f4f4;transform:scaleX(1.1);transform-origin:0 0;">0,1995</div><div class="t" style="left:15.50px;top:63.61px;font-size:17px;line-height:17px;color:#f4f4f4;font-weight:bold;transform:scaleX(1.1254);transform-origin:0 0;">y: CIE31</div><div class="t" style="left:176.40px;top:63.02px;font-size:17.7px;line-height:17.7px;color:#f4f4f4;transform:scaleX(1.1);transform-origin:0 0;">0,3222</div><div class="t" style="left:269.40px;top:63.02px;font-size:17.7px;line-height:17.7px;color:#f4f4f4;transform:scaleX(1.1);transform-origin:0 0;">0,3215</div><div class="t" style="left:363.00px;top:63.02px;font-size:17.7px;line-height:17.7px;color:#f4f4f4;transform:scaleX(1.1);transform-origin:0 0;">0,3212</div><div class="t" style="left:456.80px;top:63.02px;font-size:17.7px;line-height:17.7px;color:#f4f4f4;transform:scaleX(1.1);transform-origin:0 0;">0,3228</div><div class="t" style="left:550.60px;top:63.02px;font-size:17.7px;line-height:17.7px;color:#f4f4f4;transform:scaleX(1.1);transform-origin:0 0;">0,3216</div><div class="t" style="left:644.40px;top:63.02px;font-size:17.7px;line-height:17.7px;color:#f4f4f4;transform:scaleX(1.1);transform-origin:0 0;">0,3576</div><div class="t" style="left:715.80px;top:63.02px;font-size:17.7px;line-height:17.7px;color:#f4f4f4;transform:scaleX(1.1);transform-origin:0 0;">0,3625</div><div class="t" style="left:805.40px;top:63.02px;font-size:17.7px;line-height:17.7px;color:#f4f4f4;transform:scaleX(1.1);transform-origin:0 0;">0,3513</div><div class="t" style="left:899.20px;top:63.02px;font-size:17.7px;line-height:17.7px;color:#f4f4f4;transform:scaleX(1.1);transform-origin:0 0;">0,2493</div><div class="t" style="left:992.90px;top:63.02px;font-size:17.7px;line-height:17.7px;color:#f4f4f4;transform:scaleX(1.1);transform-origin:0 0;">0,4464</div><div class="t" style="left:1075.40px;top:63.02px;font-size:17.7px;line-height:17.7px;color:#f4f4f4;transform:scaleX(1.1);transform-origin:0 0;">0,2374</div><div class="t" style="left:1185.80px;top:63.02px;font-size:17.7px;line-height:17.7px;color:#f4f4f4;transform:scaleX(1.1);transform-origin:0 0;">0,3487</div><div class="t" style="left:1304.20px;top:63.02px;font-size:17.7px;line-height:17.7px;color:#f4f4f4;transform:scaleX(1.1);transform-origin:0 0;">0,4133</div><div class="t" style="left:1398.00px;top:63.02px;font-size:17.7px;line-height:17.7px;color:#f4f4f4;transform:scaleX(1.1);transform-origin:0 0;">0,1665</div><div class="t" style="left:15.50px;top:90.91px;font-size:17px;line-height:17px;color:#f4f4f4;font-weight:bold;transform:scaleX(1.3228);transform-origin:0 0;">Y</div><div class="t" style="left:176.40px;top:90.32px;font-size:17.7px;line-height:17.7px;color:#f4f4f4;transform:scaleX(1.1);transform-origin:0 0;">629,3912</div><div class="t" style="left:269.40px;top:90.32px;font-size:17.7px;line-height:17.7px;color:#f4f4f4;transform:scaleX(1.1);transform-origin:0 0;">489,0551</div><div class="t" style="left:363.00px;top:90.32px;font-size:17.7px;line-height:17.7px;color:#f4f4f4;transform:scaleX(1.1);transform-origin:0 0;">386,0656</div><div class="t" style="left:456.80px;top:90.32px;font-size:17.7px;line-height:17.7px;color:#f4f4f4;transform:scaleX(1.1);transform-origin:0 0;">294,8686</div><div class="t" style="left:550.60px;top:90.32px;font-size:17.7px;line-height:17.7px;color:#f4f4f4;transform:scaleX(1.1);transform-origin:0 0;">201,6299</div><div class="t" style="left:644.40px;top:90.32px;font-size:17.7px;line-height:17.7px;color:#f4f4f4;transform:scaleX(1.1);transform-origin:0 0;">0,0536</div><div class="t" style="left:715.80px;top:90.32px;font-size:17.7px;line-height:17.7px;color:#f4f4f4;transform:scaleX(1.1);transform-origin:0 0;">47,7025</div><div class="t" style="left:805.40px;top:90.32px;font-size:17.7px;line-height:17.7px;color:#f4f4f4;transform:scaleX(1.1);transform-origin:0 0;">200,5057</div><div class="t" style="left:899.20px;top:90.32px;font-size:17.7px;line-height:17.7px;color:#f4f4f4;transform:scaleX(1.1);transform-origin:0 0;">102,9974</div><div class="t" style="left:992.90px;top:90.32px;font-size:17.7px;line-height:17.7px;color:#f4f4f4;transform:scaleX(1.1);transform-origin:0 0;">67,1389</div><div class="t" style="left:1075.40px;top:90.32px;font-size:17.7px;line-height:17.7px;color:#f4f4f4;transform:scaleX(1.1);transform-origin:0 0;">129,8399</div><div class="t" style="left:1185.80px;top:90.32px;font-size:17.7px;line-height:17.7px;color:#f4f4f4;transform:scaleX(1.1);transform-origin:0 0;">247,6395</div><div class="t" style="left:1304.20px;top:90.32px;font-size:17.7px;line-height:17.7px;color:#f4f4f4;transform:scaleX(1.1);transform-origin:0 0;">162,3697</div><div class="t" style="left:1398.00px;top:90.32px;font-size:17.7px;line-height:17.7px;color:#f4f4f4;transform:scaleX(1.1);transform-origin:0 0;">59,5412</div><div class="t" style="left:15.50px;top:118.41px;font-size:17px;line-height:17px;color:#f4f4f4;font-weight:bold;transform:scaleX(1.1674);transform-origin:0 0;">Target x:CIE31</div><div class="t" style="left:176.40px;top:117.82px;font-size:17.7px;line-height:17.7px;color:#f4f4f4;transform:scaleX(1.1);transform-origin:0 0;">0,3127</div><div class="t" style="left:269.40px;top:117.82px;font-size:17.7px;line-height:17.7px;color:#f4f4f4;transform:scaleX(1.1);transform-origin:0 0;">0,3127</div><div class="t" style="left:363.00px;top:117.82px;font-size:17.7px;line-height:17.7px;color:#f4f4f4;transform:scaleX(1.1);transform-origin:0 0;">0,3127</div><div class="t" style="left:456.80px;top:117.82px;font-size:17.7px;line-height:17.7px;color:#f4f4f4;transform:scaleX(1.1);transform-origin:0 0;">0,3127</div><div class="t" style="left:550.60px;top:117.82px;font-size:17.7px;line-height:17.7px;color:#f4f4f4;transform:scaleX(1.1);transform-origin:0 0;">0,3127</div><div class="t" style="left:644.40px;top:117.82px;font-size:17.7px;line-height:17.7px;color:#f4f4f4;transform:scaleX(1.1);transform-origin:0 0;">0,3127</div><div class="t" style="left:715.80px;top:117.82px;font-size:17.7px;line-height:17.7px;color:#f4f4f4;transform:scaleX(1.1);transform-origin:0 0;">0,4006</div><div class="t" style="left:805.40px;top:117.82px;font-size:17.7px;line-height:17.7px;color:#f4f4f4;transform:scaleX(1.1);transform-origin:0 0;">0,3789</div><div class="t" style="left:899.20px;top:117.82px;font-size:17.7px;line-height:17.7px;color:#f4f4f4;transform:scaleX(1.1);transform-origin:0 0;">0,2489</div><div class="t" style="left:992.90px;top:117.82px;font-size:17.7px;line-height:17.7px;color:#f4f4f4;transform:scaleX(1.1);transform-origin:0 0;">0,3373</div><div class="t" style="left:1075.40px;top:117.82px;font-size:17.7px;line-height:17.7px;color:#f4f4f4;transform:scaleX(1.1);transform-origin:0 0;">0,2674</div><div class="t" style="left:1185.80px;top:117.82px;font-size:17.7px;line-height:17.7px;color:#f4f4f4;transform:scaleX(1.1);transform-origin:0 0;">0,2615</div><div class="t" style="left:1304.20px;top:117.82px;font-size:17.7px;line-height:17.7px;color:#f4f4f4;transform:scaleX(1.1);transform-origin:0 0;">0,5113</div><div class="t" style="left:1398.00px;top:117.82px;font-size:17.7px;line-height:17.7px;color:#f4f4f4;transform:scaleX(1.1);transform-origin:0 0;">0,2110</div><div class="t" style="left:15.50px;top:145.91px;font-size:17px;line-height:17px;color:#f4f4f4;font-weight:bold;transform:scaleX(1.1674);transform-origin:0 0;">Target y:CIE31</div><div class="t" style="left:176.40px;top:145.32px;font-size:17.7px;line-height:17.7px;color:#f4f4f4;transform:scaleX(1.1);transform-origin:0 0;">0,3290</div><div class="t" style="left:269.40px;top:145.32px;font-size:17.7px;line-height:17.7px;color:#f4f4f4;transform:scaleX(1.1);transform-origin:0 0;">0,3290</div><div class="t" style="left:363.00px;top:145.32px;font-size:17.7px;line-height:17.7px;color:#f4f4f4;transform:scaleX(1.1);transform-origin:0 0;">0,3290</div><div class="t" style="left:456.80px;top:145.32px;font-size:17.7px;line-height:17.7px;color:#f4f4f4;transform:scaleX(1.1);transform-origin:0 0;">0,3290</div><div class="t" style="left:550.60px;top:145.32px;font-size:17.7px;line-height:17.7px;color:#f4f4f4;transform:scaleX(1.1);transform-origin:0 0;">0,3290</div><div class="t" style="left:644.40px;top:145.32px;font-size:17.7px;line-height:17.7px;color:#f4f4f4;transform:scaleX(1.1);transform-origin:0 0;">0,3290</div><div class="t" style="left:715.80px;top:145.32px;font-size:17.7px;line-height:17.7px;color:#f4f4f4;transform:scaleX(1.1);transform-origin:0 0;">0,3595</div><div class="t" style="left:805.40px;top:145.32px;font-size:17.7px;line-height:17.7px;color:#f4f4f4;transform:scaleX(1.1);transform-origin:0 0;">0,3537</div><div class="t" style="left:899.20px;top:145.32px;font-size:17.7px;line-height:17.7px;color:#f4f4f4;transform:scaleX(1.1);transform-origin:0 0;">0,2672</div><div class="t" style="left:992.90px;top:145.32px;font-size:17.7px;line-height:17.7px;color:#f4f4f4;transform:scaleX(1.1);transform-origin:0 0;">0,4270</div><div class="t" style="left:1075.40px;top:145.32px;font-size:17.7px;line-height:17.7px;color:#f4f4f4;transform:scaleX(1.1);transform-origin:0 0;">0,2542</div><div class="t" style="left:1185.80px;top:145.32px;font-size:17.7px;line-height:17.7px;color:#f4f4f4;transform:scaleX(1.1);transform-origin:0 0;">0,3561</div><div class="t" style="left:1304.20px;top:145.32px;font-size:17.7px;line-height:17.7px;color:#f4f4f4;transform:scaleX(1.1);transform-origin:0 0;">0,4058</div><div class="t" style="left:1398.00px;top:145.32px;font-size:17.7px;line-height:17.7px;color:#f4f4f4;transform:scaleX(1.1);transform-origin:0 0;">0,1960</div><div class="t" style="left:15.50px;top:173.41px;font-size:17px;line-height:17px;color:#f4f4f4;font-weight:bold;transform:scaleX(1.3845);transform-origin:0 0;">Target Y</div><div class="t" style="left:176.40px;top:172.82px;font-size:17.7px;line-height:17.7px;color:#f4f4f4;transform:scaleX(1.1);transform-origin:0 0;">629,3912</div><div class="t" style="left:269.40px;top:172.82px;font-size:17.7px;line-height:17.7px;color:#f4f4f4;transform:scaleX(1.1);transform-origin:0 0;">498,0359</div><div class="t" style="left:363.00px;top:172.82px;font-size:17.7px;line-height:17.7px;color:#f4f4f4;transform:scaleX(1.1);transform-origin:0 0;">401,2978</div><div class="t" style="left:456.80px;top:172.82px;font-size:17.7px;line-height:17.7px;color:#f4f4f4;transform:scaleX(1.1);transform-origin:0 0;">309,0442</div><div class="t" style="left:550.60px;top:172.82px;font-size:17.7px;line-height:17.7px;color:#f4f4f4;transform:scaleX(1.1);transform-origin:0 0;">215,1979</div><div class="t" style="left:644.40px;top:172.82px;font-size:17.7px;line-height:17.7px;color:#f4f4f4;transform:scaleX(1.1);transform-origin:0 0;">0,0000</div><div class="t" style="left:715.80px;top:172.82px;font-size:17.7px;line-height:17.7px;color:#f4f4f4;transform:scaleX(1.1);transform-origin:0 0;">62,1770</div><div class="t" style="left:805.40px;top:172.82px;font-size:17.7px;line-height:17.7px;color:#f4f4f4;transform:scaleX(1.1);transform-origin:0 0;">215,2535</div><div class="t" style="left:899.20px;top:172.82px;font-size:17.7px;line-height:17.7px;color:#f4f4f4;transform:scaleX(1.1);transform-origin:0 0;">118,6081</div><div class="t" style="left:992.90px;top:172.82px;font-size:17.7px;line-height:17.7px;color:#f4f4f4;transform:scaleX(1.1);transform-origin:0 0;">82,5798</div><div class="t" style="left:1075.40px;top:172.82px;font-size:17.7px;line-height:17.7px;color:#f4f4f4;transform:scaleX(1.1);transform-origin:0 0;">145,4102</div><div class="t" style="left:1185.80px;top:172.82px;font-size:17.7px;line-height:17.7px;color:#f4f4f4;transform:scaleX(1.1);transform-origin:0 0;">262,1450</div><div class="t" style="left:1304.20px;top:172.82px;font-size:17.7px;line-height:17.7px;color:#f4f4f4;transform:scaleX(1.1);transform-origin:0 0;">178,6393</div><div class="t" style="left:1398.00px;top:172.82px;font-size:17.7px;line-height:17.7px;color:#f4f4f4;transform:scaleX(1.1);transform-origin:0 0;">74,0412</div><div class="t" style="left:15.50px;top:200.61px;font-size:17px;line-height:17px;color:#f4f4f4;font-weight:bold;transform:scaleX(1.1951);transform-origin:0 0;">ΔE 2000</div><div class="t" style="left:176.40px;top:200.02px;font-size:17.7px;line-height:17.7px;color:#f4f4f4;transform:scaleX(1.1);transform-origin:0 0;">3,6786</div><div class="t" style="left:269.40px;top:200.02px;font-size:17.7px;line-height:17.7px;color:#f4f4f4;transform:scaleX(1.1);transform-origin:0 0;">3,6349</div><div class="t" style="left:363.00px;top:200.02px;font-size:17.7px;line-height:17.7px;color:#f4f4f4;transform:scaleX(1.1);transform-origin:0 0;">3,5544</div><div class="t" style="left:456.80px;top:200.02px;font-size:17.7px;line-height:17.7px;color:#f4f4f4;transform:scaleX(1.1);transform-origin:0 0;">2,8672</div><div class="t" style="left:550.60px;top:200.02px;font-size:17.7px;line-height:17.7px;color:#f4f4f4;transform:scaleX(1.1);transform-origin:0 0;">3,0684</div><div class="t" style="left:644.40px;top:200.02px;font-size:17.7px;line-height:17.7px;color:#f4f4f4;transform:scaleX(1.1);transform-origin:0 0;">0,0529</div><div class="t" style="left:715.80px;top:200.02px;font-size:17.7px;line-height:17.7px;color:#f4f4f4;transform:scaleX(1.1);transform-origin:0 0;">3,8690</div><div class="t" style="left:805.40px;top:200.02px;font-size:17.7px;line-height:17.7px;color:#f4f4f4;transform:scaleX(1.1);transform-origin:0 0;">1,7890</div><div class="t" style="left:899.20px;top:200.02px;font-size:17.7px;line-height:17.7px;color:#f4f4f4;transform:scaleX(1.1);transform-origin:0 0;">3,6473</div><div class="t" style="left:992.90px;top:200.02px;font-size:17.7px;line-height:17.7px;color:#f4f4f4;transform:scaleX(1.1);transform-origin:0 0;">3,8292</div><div class="t" style="left:1075.40px;top:200.02px;font-size:17.7px;line-height:17.7px;color:#f4f4f4;transform:scaleX(1.1);transform-origin:0 0;">3,4931</div><div class="t" style="left:1185.80px;top:200.02px;font-size:17.7px;line-height:17.7px;color:#f4f4f4;transform:scaleX(1.1);transform-origin:0 0;">2,5945</div><div class="t" style="left:1304.20px;top:200.02px;font-size:17.7px;line-height:17.7px;color:#f4f4f4;transform:scaleX(1.1);transform-origin:0 0;">2,9820</div><div class="t" style="left:1398.00px;top:200.02px;font-size:17.7px;line-height:17.7px;color:#f4f4f4;transform:scaleX(1.1);transform-origin:0 0;">3,9811</div><div class="r" style="left:0px;top:221px;width:1432px;height:17px;background:#5a5a5a"></div><div class="r" style="left:3px;top:223px;width:12px;height:13px;background:#7a7a7a;border-radius:2px"></div><svg class="r" style="left:5px;top:225px" width="9" height="9" viewBox="0 0 9 9"><path d="M7 1 L2 4.5 L7 8 Z" fill="#3a3a3a"/></svg><div class="r" style="left:20px;top:223px;width:622px;height:13px;background:#444;border-radius:6px"></div><div class="r" style="left:1413px;top:223px;width:13px;height:13px;background:#7a7a7a;border-radius:2px"></div><svg class="r" style="left:1415px;top:225px" width="9" height="9" viewBox="0 0 9 9"><path d="M2 1 L7 4.5 L2 8 Z" fill="#3a3a3a"/></svg></div><div class="r" style="left:0px;top:964px;width:1920px;height:76px;background:#3a3a3a"></div><div class="r" style="left:0px;top:964px;width:1920px;height:5px;background:#333"></div><div class="r" style="left:0;top:964px;width:1564px;height:62px;overflow:hidden"><div class="r" style="left:-21.6px;top:6px;width:56px;height:55px;background:linear-gradient(#a2a2a2 0%,#8e8e8e 45%,#7c7c7c 100%);border-radius:5px;box-shadow:inset 0 0 0 1px #8a8a8a"></div><div class="r" style="left:-15.6px;top:12px;width:44.5px;height:27px;background:#c8c8c8;border-radius:4px;box-shadow:inset 0 1px 1px rgba(0,0,0,0.35)"></div><div class="t" style="left:-14.70px;top:46.77px;font-size:11.5px;line-height:11.5px;color:#2c2c2c;font-weight:bold;">Gray 50</div><div class="r" style="left:37.2px;top:6px;width:56px;height:55px;background:linear-gradient(#a2a2a2 0%,#8e8e8e 45%,#7c7c7c 100%);border-radius:5px;box-shadow:inset 0 0 0 1px #8a8a8a"></div><div class="r" style="left:43.2px;top:12px;width:44.5px;height:27px;background:#a8a8a8;border-radius:4px;box-shadow:inset 0 1px 1px rgba(0,0,0,0.35)"></div><div class="t" style="left:44.10px;top:46.77px;font-size:11.5px;line-height:11.5px;color:#2c2c2c;font-weight:bold;">Gray 35</div><div class="r" style="left:96.0px;top:6px;width:56px;height:55px;background:linear-gradient(#a2a2a2 0%,#8e8e8e 45%,#7c7c7c 100%);border-radius:5px;box-shadow:inset 0 0 0 1px #8a8a8a"></div><div class="r" style="left:102.0px;top:12px;width:44.5px;height:27px;background:#000000;border-radius:4px;box-shadow:inset 0 1px 1px rgba(0,0,0,0.35)"></div><div class="t" style="left:108.66px;top:46.77px;font-size:11.5px;line-height:11.5px;color:#2c2c2c;font-weight:bold;">Black</div><div class="r" style="left:154.8px;top:6px;width:56px;height:55px;background:linear-gradient(#a2a2a2 0%,#8e8e8e 45%,#7c7c7c 100%);border-radius:5px;box-shadow:inset 0 0 0 1px #8a8a8a"></div><div class="r" style="left:160.8px;top:12px;width:44.5px;height:27px;background:#7a5546;border-radius:4px;box-shadow:inset 0 1px 1px rgba(0,0,0,0.35)"></div><div class="t" style="left:156.27px;top:46.77px;font-size:11.5px;line-height:11.5px;color:#2c2c2c;font-weight:bold;">Dark Skin</div><div class="r" style="left:213.6px;top:6px;width:56px;height:55px;background:linear-gradient(#a2a2a2 0%,#8e8e8e 45%,#7c7c7c 100%);border-radius:5px;box-shadow:inset 0 0 0 1px #8a8a8a"></div><div class="r" style="left:219.6px;top:12px;width:44.5px;height:27px;background:#c89a84;border-radius:4px;box-shadow:inset 0 1px 1px rgba(0,0,0,0.35)"></div><div class="t" style="left:213.81px;top:46.77px;font-size:11.5px;line-height:11.5px;color:#2c2c2c;font-weight:bold;">Light Skin</div><div class="r" style="left:272.4px;top:6px;width:56px;height:55px;background:linear-gradient(#a2a2a2 0%,#8e8e8e 45%,#7c7c7c 100%);border-radius:5px;box-shadow:inset 0 0 0 1px #8a8a8a"></div><div class="r" style="left:278.4px;top:12px;width:44.5px;height:27px;background:#6282b0;border-radius:4px;box-shadow:inset 0 1px 1px rgba(0,0,0,0.35)"></div><div class="t" style="left:276.11px;top:46.77px;font-size:11.5px;line-height:11.5px;color:#2c2c2c;font-weight:bold;">Blue Sky</div><div class="r" style="left:331.2px;top:6px;width:56px;height:55px;background:linear-gradient(#a2a2a2 0%,#8e8e8e 45%,#7c7c7c 100%);border-radius:5px;box-shadow:inset 0 0 0 1px #8a8a8a"></div><div class="r" style="left:337.2px;top:12px;width:44.5px;height:27px;background:#5a6e40;border-radius:4px;box-shadow:inset 0 1px 1px rgba(0,0,0,0.35)"></div><div class="t" style="left:339.07px;top:46.77px;font-size:11.5px;line-height:11.5px;color:#2c2c2c;font-weight:bold;">Foliage</div><div class="r" style="left:390.0px;top:6px;width:56px;height:55px;background:linear-gradient(#a2a2a2 0%,#8e8e8e 45%,#7c7c7c 100%);border-radius:5px;box-shadow:inset 0 0 0 1px #8a8a8a"></div><div class="r" style="left:396.0px;top:12px;width:44.5px;height:13.5px;background:#8a88c0;border-radius:4px;box-shadow:inset 0 1px 1px rgba(0,0,0,0.35)"></div><div class="t" style="left:399.47px;top:33.57px;font-size:11.5px;line-height:11.5px;color:#2c2c2c;font-weight:bold;">Blue</div><div class="t" style="left:399.47px;top:46.87px;font-size:11.5px;line-height:11.5px;color:#2c2c2c;font-weight:bold;">Flower</div><div class="r" style="left:448.8px;top:6px;width:56px;height:55px;background:linear-gradient(#a2a2a2 0%,#8e8e8e 45%,#7c7c7c 100%);border-radius:5px;box-shadow:inset 0 0 0 1px #8a8a8a"></div><div class="r" style="left:454.8px;top:12px;width:44.5px;height:13.5px;background:#66c0aa;border-radius:4px;box-shadow:inset 0 1px 1px rgba(0,0,0,0.35)"></div><div class="t" style="left:459.23px;top:33.57px;font-size:11.5px;line-height:11.5px;color:#2c2c2c;font-weight:bold;">Bluish</div><div class="t" style="left:459.23px;top:46.87px;font-size:11.5px;line-height:11.5px;color:#2c2c2c;font-weight:bold;">Green</div><div class="r" style="left:507.6px;top:6px;width:56px;height:55px;background:linear-gradient(#a2a2a2 0%,#8e8e8e 45%,#7c7c7c 100%);border-radius:5px;box-shadow:inset 0 0 0 1px #8a8a8a"></div><div class="r" style="left:513.6px;top:12px;width:44.5px;height:27px;background:#e08838;border-radius:4px;box-shadow:inset 0 1px 1px rgba(0,0,0,0.35)"></div><div class="t" style="left:515.47px;top:46.77px;font-size:11.5px;line-height:11.5px;color:#2c2c2c;font-weight:bold;">Orange</div><div class="r" style="left:566.4px;top:6px;width:56px;height:55px;background:linear-gradient(#a2a2a2 0%,#8e8e8e 45%,#7c7c7c 100%);border-radius:5px;box-shadow:inset 0 0 0 1px #8a8a8a"></div><div class="r" style="left:572.4px;top:12px;width:44.5px;height:13.5px;background:#4a5cb0;border-radius:4px;box-shadow:inset 0 1px 1px rgba(0,0,0,0.35)"></div><div class="t" style="left:571.40px;top:33.57px;font-size:11.5px;line-height:11.5px;color:#2c2c2c;font-weight:bold;">Purplish</div><div class="t" style="left:571.40px;top:46.87px;font-size:11.5px;line-height:11.5px;color:#2c2c2c;font-weight:bold;">Blue</div><div class="r" style="left:625.2px;top:6px;width:56px;height:55px;background:linear-gradient(#a2a2a2 0%,#8e8e8e 45%,#7c7c7c 100%);border-radius:5px;box-shadow:inset 0 0 0 1px #8a8a8a"></div><div class="r" style="left:631.2px;top:12px;width:44.5px;height:13.5px;background:#c85a64;border-radius:4px;box-shadow:inset 0 1px 1px rgba(0,0,0,0.35)"></div><div class="t" style="left:627.64px;top:33.57px;font-size:11.5px;line-height:11.5px;color:#2c2c2c;font-weight:bold;">Moderate</div><div class="t" style="left:627.64px;top:46.87px;font-size:11.5px;line-height:11.5px;color:#2c2c2c;font-weight:bold;">Red</div><div class="r" style="left:684.0px;top:6px;width:56px;height:55px;background:linear-gradient(#a2a2a2 0%,#8e8e8e 45%,#7c7c7c 100%);border-radius:5px;box-shadow:inset 0 0 0 1px #8a8a8a"></div><div class="r" style="left:690.0px;top:12px;width:44.5px;height:27px;background:#5a3c78;border-radius:4px;box-shadow:inset 0 1px 1px rgba(0,0,0,0.35)"></div><div class="t" style="left:694.11px;top:46.77px;font-size:11.5px;line-height:11.5px;color:#2c2c2c;font-weight:bold;">Purple</div><div class="r" style="left:742.8px;top:6px;width:56px;height:55px;background:linear-gradient(#a2a2a2 0%,#8e8e8e 45%,#7c7c7c 100%);border-radius:5px;box-shadow:inset 0 0 0 1px #8a8a8a"></div><div class="r" style="left:748.8px;top:12px;width:44.5px;height:13.5px;background:#a0c040;border-radius:4px;box-shadow:inset 0 1px 1px rgba(0,0,0,0.35)"></div><div class="t" style="left:752.90px;top:33.57px;font-size:11.5px;line-height:11.5px;color:#2c2c2c;font-weight:bold;">Yellow</div><div class="t" style="left:752.90px;top:46.87px;font-size:11.5px;line-height:11.5px;color:#2c2c2c;font-weight:bold;">Green</div><div class="r" style="left:801.6px;top:6px;width:56px;height:55px;background:linear-gradient(#a2a2a2 0%,#8e8e8e 45%,#7c7c7c 100%);border-radius:5px;box-shadow:inset 0 0 0 1px #8a8a8a"></div><div class="r" style="left:807.6px;top:12px;width:44.5px;height:13.5px;background:#e8a838;border-radius:4px;box-shadow:inset 0 1px 1px rgba(0,0,0,0.35)"></div><div class="t" style="left:809.47px;top:33.57px;font-size:11.5px;line-height:11.5px;color:#2c2c2c;font-weight:bold;">Orange</div><div class="t" style="left:809.47px;top:46.87px;font-size:11.5px;line-height:11.5px;color:#2c2c2c;font-weight:bold;">Yellow</div><div class="r" style="left:860.4px;top:6px;width:56px;height:55px;background:linear-gradient(#a2a2a2 0%,#8e8e8e 45%,#7c7c7c 100%);border-radius:5px;box-shadow:inset 0 0 0 1px #8a8a8a"></div><div class="r" style="left:866.4px;top:12px;width:44.5px;height:27px;background:#3040a8;border-radius:4px;box-shadow:inset 0 1px 1px rgba(0,0,0,0.35)"></div><div class="t" style="left:875.94px;top:46.77px;font-size:11.5px;line-height:11.5px;color:#2c2c2c;font-weight:bold;">Blue</div><div class="r" style="left:919.2px;top:6px;width:56px;height:55px;background:linear-gradient(#a2a2a2 0%,#8e8e8e 45%,#7c7c7c 100%);border-radius:5px;box-shadow:inset 0 0 0 1px #8a8a8a"></div><div class="r" style="left:925.2px;top:12px;width:44.5px;height:27px;background:#48a048;border-radius:4px;box-shadow:inset 0 1px 1px rgba(0,0,0,0.35)"></div><div class="t" style="left:930.58px;top:46.77px;font-size:11.5px;line-height:11.5px;color:#2c2c2c;font-weight:bold;">Green</div><div class="r" style="left:978.0px;top:6px;width:56px;height:55px;background:linear-gradient(#a2a2a2 0%,#8e8e8e 45%,#7c7c7c 100%);border-radius:5px;box-shadow:inset 0 0 0 1px #8a8a8a"></div><div class="r" style="left:984.0px;top:12px;width:44.5px;height:27px;background:#b03838;border-radius:4px;box-shadow:inset 0 1px 1px rgba(0,0,0,0.35)"></div><div class="t" style="left:995.14px;top:46.77px;font-size:11.5px;line-height:11.5px;color:#2c2c2c;font-weight:bold;">Red</div><div class="r" style="left:1036.8px;top:6px;width:56px;height:55px;background:linear-gradient(#a2a2a2 0%,#8e8e8e 45%,#7c7c7c 100%);border-radius:5px;box-shadow:inset 0 0 0 1px #8a8a8a"></div><div class="r" style="left:1042.8px;top:12px;width:44.5px;height:27px;background:#e8c840;border-radius:4px;box-shadow:inset 0 1px 1px rgba(0,0,0,0.35)"></div><div class="t" style="left:1046.90px;top:46.77px;font-size:11.5px;line-height:11.5px;color:#2c2c2c;font-weight:bold;">Yellow</div><div class="r" style="left:1095.6px;top:6px;width:56px;height:55px;background:linear-gradient(#a2a2a2 0%,#8e8e8e 45%,#7c7c7c 100%);border-radius:5px;box-shadow:inset 0 0 0 1px #8a8a8a"></div><div class="r" style="left:1101.6px;top:12px;width:44.5px;height:27px;background:#b850a0;border-radius:4px;box-shadow:inset 0 1px 1px rgba(0,0,0,0.35)"></div><div class="t" style="left:1100.28px;top:46.77px;font-size:11.5px;line-height:11.5px;color:#2c2c2c;font-weight:bold;">Magenta</div><div class="r" style="left:1154.4px;top:6px;width:56px;height:55px;background:linear-gradient(#a2a2a2 0%,#8e8e8e 45%,#7c7c7c 100%);border-radius:5px;box-shadow:inset 0 0 0 1px #8a8a8a"></div><div class="r" style="left:1160.4px;top:12px;width:44.5px;height:27px;background:#1890b8;border-radius:4px;box-shadow:inset 0 1px 1px rgba(0,0,0,0.35)"></div><div class="t" style="left:1168.34px;top:46.77px;font-size:11.5px;line-height:11.5px;color:#2c2c2c;font-weight:bold;">Cyan</div><div class="r" style="left:1213.2px;top:6px;width:56px;height:55px;background:linear-gradient(#a2a2a2 0%,#8e8e8e 45%,#7c7c7c 100%);border-radius:5px;box-shadow:inset 0 0 0 1px #8a8a8a"></div><div class="r" style="left:1219.2px;top:12px;width:44.5px;height:27px;background:#ff0000;border-radius:4px;box-shadow:inset 0 1px 1px rgba(0,0,0,0.35)"></div><div class="t" style="left:1214.03px;top:46.77px;font-size:11.5px;line-height:11.5px;color:#2c2c2c;font-weight:bold;">100% Red</div><div class="r" style="left:1272.0px;top:6px;width:56px;height:55px;background:linear-gradient(#a2a2a2 0%,#8e8e8e 45%,#7c7c7c 100%);border-radius:5px;box-shadow:inset 0 0 0 1px #8a8a8a"></div><div class="r" style="left:1278.0px;top:12px;width:44.5px;height:13.5px;background:#00ff00;border-radius:4px;box-shadow:inset 0 1px 1px rgba(0,0,0,0.35)"></div><div class="t" style="left:1283.38px;top:33.57px;font-size:11.5px;line-height:11.5px;color:#2c2c2c;font-weight:bold;">100%</div><div class="t" style="left:1283.38px;top:46.87px;font-size:11.5px;line-height:11.5px;color:#2c2c2c;font-weight:bold;">Green</div><div class="r" style="left:1330.8px;top:6px;width:56px;height:55px;background:linear-gradient(#a2a2a2 0%,#8e8e8e 45%,#7c7c7c 100%);border-radius:5px;box-shadow:inset 0 0 0 1px #8a8a8a"></div><div class="r" style="left:1336.8px;top:12px;width:44.5px;height:13.5px;background:#0000ff;border-radius:4px;box-shadow:inset 0 1px 1px rgba(0,0,0,0.35)"></div><div class="t" style="left:1344.09px;top:33.57px;font-size:11.5px;line-height:11.5px;color:#2c2c2c;font-weight:bold;">100%</div><div class="t" style="left:1344.09px;top:46.87px;font-size:11.5px;line-height:11.5px;color:#2c2c2c;font-weight:bold;">Blue</div><div class="r" style="left:1389.6px;top:6px;width:56px;height:55px;background:linear-gradient(#a2a2a2 0%,#8e8e8e 45%,#7c7c7c 100%);border-radius:5px;box-shadow:inset 0 0 0 1px #8a8a8a"></div><div class="r" style="left:1395.6px;top:12px;width:44.5px;height:13.5px;background:#00ffff;border-radius:4px;box-shadow:inset 0 1px 1px rgba(0,0,0,0.35)"></div><div class="t" style="left:1402.89px;top:33.57px;font-size:11.5px;line-height:11.5px;color:#2c2c2c;font-weight:bold;">100%</div><div class="t" style="left:1402.89px;top:46.87px;font-size:11.5px;line-height:11.5px;color:#2c2c2c;font-weight:bold;">Cyan</div><div class="r" style="left:1448.4px;top:6px;width:56px;height:55px;background:linear-gradient(#a2a2a2 0%,#8e8e8e 45%,#7c7c7c 100%);border-radius:5px;box-shadow:inset 0 0 0 1px #8a8a8a"></div><div class="r" style="left:1454.4px;top:12px;width:44.5px;height:13.5px;background:#ff00ff;border-radius:4px;box-shadow:inset 0 1px 1px rgba(0,0,0,0.35)"></div><div class="t" style="left:1453.08px;top:33.57px;font-size:11.5px;line-height:11.5px;color:#2c2c2c;font-weight:bold;">100%</div><div class="t" style="left:1453.08px;top:46.87px;font-size:11.5px;line-height:11.5px;color:#2c2c2c;font-weight:bold;">Magenta</div><div class="r" style="left:1507.2px;top:6px;width:56px;height:55.5px;background:#202020;border-radius:5px"></div><div class="r" style="left:1513.2px;top:12px;width:44.5px;height:13.5px;background:#ffff00;border-radius:4px;box-shadow:inset 0 1px 1px rgba(0,0,0,0.35)"></div><div class="t" style="left:1517.30px;top:33.57px;font-size:11.5px;line-height:11.5px;color:#ffffff;font-weight:bold;">100%</div><div class="t" style="left:1517.30px;top:46.87px;font-size:11.5px;line-height:11.5px;color:#ffffff;font-weight:bold;">Yellow</div></div><div class="r" style="left:0px;top:1025px;width:1564px;height:14px;background:#5e5e5e"></div><div class="r" style="left:2px;top:1026px;width:12px;height:13px;background:#8a8a8a;border-radius:2px"></div><svg class="r" style="left:4px;top:1028px" width="9" height="9" viewBox="0 0 9 9"><path d="M7 0.5 L2 4.5 L7 8.5 Z" fill="#3a3a3a"/></svg><div class="r" style="left:190px;top:1026px;width:1356px;height:12px;background:#484848;border-radius:6px"></div><div class="r" style="left:1551px;top:1026px;width:12px;height:13px;background:#8a8a8a;border-radius:2px"></div><svg class="r" style="left:1553px;top:1028px" width="9" height="9" viewBox="0 0 9 9"><path d="M2 0.5 L7 4.5 L2 8.5 Z" fill="#3a3a3a"/></svg><div class="r" style="left:0px;top:1039px;width:1920px;height:1px;background:#2a2a2a"></div><div class="r" style="left:1566px;top:970px;width:53px;height:20px;background:linear-gradient(#a8a8a8 0%,#8e8e8e 50%,#7e7e7e 100%);border-radius:4px 4px 0 0"></div><div class="r" style="left:1583px;top:971px;width:18px;height:18px;border-radius:50%;background:linear-gradient(#7a7a7a,#9a9a9a)"></div><svg class="r" style="left:1586px;top:975px" width="12" height="8" viewBox="0 0 12 8"><path d="M1 7 L6 1.5 L11 7 Z" fill="#2a2a2a"/></svg><div class="r" style="left:1566px;top:991px;width:53px;height:47px;background:linear-gradient(#a8a8a8 0%,#8e8e8e 50%,#7e7e7e 100%);border-radius:0 0 4px 4px"></div><div class="r" style="left:1574.5px;top:997.5px;width:34px;height:34px;background:#8c8c8c;border:3px solid #262626;border-radius:5px;box-sizing:border-box"></div><div class="r" style="left:1584px;top:1007.5px;width:16px;height:16px;background:linear-gradient(#111 50%,#000 50%)"></div><div class="r" style="left:1620.3px;top:970px;width:51.100000000000136px;height:34px;background:linear-gradient(#a8a8a8 0%,#8e8e8e 50%,#7e7e7e 100%);border-radius:4px 0 0 0;"></div><div class="r" style="left:1671.4px;top:970px;width:1px;height:34px;background:#5a5a5a"></div><div class="r" style="left:1672.4px;top:970px;width:49.69999999999982px;height:34px;background:linear-gradient(#a8a8a8 0%,#8e8e8e 50%,#7e7e7e 100%);"></div><div class="r" style="left:1722.1px;top:970px;width:1px;height:34px;background:#5a5a5a"></div><div class="r" style="left:1723.1px;top:970px;width:50.0px;height:34px;background:linear-gradient(#a8a8a8 0%,#8e8e8e 50%,#7e7e7e 100%);"></div><div class="r" style="left:1773.1px;top:970px;width:1px;height:34px;background:#5a5a5a"></div><div class="r" style="left:1774.1px;top:970px;width:49.80000000000018px;height:34px;background:linear-gradient(#a8a8a8 0%,#8e8e8e 50%,#7e7e7e 100%);"></div><div class="r" style="left:1823.9px;top:970px;width:1px;height:34px;background:#5a5a5a"></div><div class="r" style="left:1824.9px;top:970px;width:49.299999999999955px;height:34px;background:linear-gradient(#3c3c3c,#2c2c2c);"></div><div class="r" style="left:1874.2px;top:970px;width:1px;height:34px;background:#5a5a5a"></div><div class="r" style="left:1875.2px;top:970px;width:43.799999999999955px;height:34px;background:linear-gradient(#3c3c3c,#2c2c2c);"></div><div class="r" style="left:1919px;top:970px;width:1px;height:34px;background:#5a5a5a"></div><div class="r" style="left:1635px;top:975.7px;width:22px;height:22px;border-radius:50%;background:linear-gradient(#7a7a7a,#a0a0a0)"></div><div class="r" style="left:1687px;top:975.7px;width:22px;height:22px;border-radius:50%;background:linear-gradient(#7a7a7a,#a0a0a0)"></div><div class="r" style="left:1737.3px;top:975.7px;width:22px;height:22px;border-radius:50%;background:linear-gradient(#7a7a7a,#a0a0a0)"></div><div class="r" style="left:1788.7px;top:975.7px;width:22px;height:22px;border-radius:50%;background:linear-gradient(#7a7a7a,#a0a0a0)"></div><div class="r" style="left:1839px;top:975.7px;width:22px;height:22px;border-radius:50%;background:linear-gradient(#262626,#3a3a3a)"></div><div class="r" style="left:1891.5px;top:975.7px;width:22px;height:22px;border-radius:50%;background:linear-gradient(#262626,#3a3a3a)"></div><div class="r" style="left:1641.5px;top:982px;width:9px;height:9px;background:#1e1e1e"></div><svg class="r" style="left:1692px;top:979px" width="14" height="16" viewBox="0 0 14 16"><path d="M2 1.5 L12 8 L2 14.5 Z" fill="#1e1e1e"/></svg><div class="t" style="left:1739.64px;top:981.00px;font-size:13px;line-height:13px;color:#222;font-weight:bold;">[··]</div><div class="t" style="left:1792.57px;top:976.07px;font-size:20px;line-height:20px;color:#222;font-weight:bold;">∞</div><svg class="r" style="left:1841px;top:978px" width="18" height="18" viewBox="0 0 18 18"><path d="M3.5 9 A5.5 5.5 0 0 1 13 5 M14.5 9 A5.5 5.5 0 0 1 5 13" fill="none" stroke="#1a1a1a" stroke-width="2.4"/><path d="M12 2 L15 6 L10.5 6.5 Z M6 16 L3 12 L7.5 11.5 Z" fill="#1a1a1a"/></svg><div class="r" style="left:1620.3px;top:1005px;width:153px;height:35px;background:linear-gradient(#a8a8a8 0%,#8e8e8e 50%,#7e7e7e 100%);border-radius:4px 0 0 0"></div><div class="r" style="left:1774.1px;top:1005px;width:146px;height:35px;background:linear-gradient(#a8a8a8 0%,#8e8e8e 50%,#7e7e7e 100%);border-radius:4px 0 0 0"></div><div class="r" style="left:1773px;top:1005px;width:1px;height:35px;background:#5a5a5a"></div><div class="r" style="left:1643.9px;top:1011.3px;width:22px;height:22px;border-radius:50%;background:linear-gradient(#7a7a7a,#a0a0a0)"></div><div class="r" style="left:1885px;top:1011.3px;width:22px;height:22px;border-radius:50%;background:linear-gradient(#7a7a7a,#a0a0a0)"></div><div class="t" style="left:1648.78px;top:1009.88px;font-size:22px;line-height:22px;color:#2e2e2e;">«</div><div class="t" style="left:1889.88px;top:1009.88px;font-size:22px;line-height:22px;color:#2e2e2e;">»</div><div class="t" style="left:1685.50px;top:1010.51px;font-size:23.5px;line-height:23.5px;color:#3a3a3a;font-weight:bold;">Back</div><div class="t" style="left:1806.30px;top:1010.51px;font-size:23.5px;line-height:23.5px;color:#3a3a3a;font-weight:bold;transform:scaleX(1.1386);transform-origin:0 0;">Next</div><div class="r" style="left:1113px;top:115px;width:740px;height:593px;background:#1c1c1c"></div><div class="r" style="left:1120px;top:122px;width:726px;height:579px;background:#333333"></div><div class="t" style="left:1443.25px;top:128.80px;font-size:15px;line-height:15px;color:#e0e0e0;transform:scaleX(0.9730);transform-origin:0 0;">CIE 1931 xy</div><div class="r" style="left:1151px;top:147px;width:692px;height:524px;background:#242424"></div><div class="r" style="left:1151px;top:147px;width:692px;height:524px;overflow:hidden"><div class="r" style="left:0;top:0;width:692px;height:524px;background:linear-gradient(rgba(0,0,0,0.4),rgba(0,0,0,0.4)),conic-gradient(from -9.9deg at 257.7px 318.9px, #00ff00 0deg, #ffff00 48.5deg, #ff0000 100.9deg, #ff00ff 180deg, #0000ff 228.5deg, #00ffff 281deg, #00ff00 360deg);clip-path:path('M143.7 520.9 L143.7 520.9 L143.7 520.9 L143.6 520.9 L143.6 520.9 L143.6 520.9 L143.5 520.9 L143.5 520.9 L143.5 520.9 L143.4 520.9 L143.4 520.9 L143.3 520.9 L143.3 520.9 L143.2 521.0 L143.2 521.0 L143.1 521.0 L143.0 521.0 L143.0 521.0 L142.9 521.0 L142.9 521.0 L142.8 521.0 L142.7 521.0 L142.6 521.0 L142.6 521.0 L142.5 521.0 L142.4 521.0 L142.3 521.0 L142.2 521.0 L142.1 521.0 L141.9 521.0 L141.8 520.9 L141.6 520.9 L141.5 520.8 L141.3 520.7 L141.1 520.6 L140.8 520.5 L140.6 520.4 L140.3 520.2 L140.0 520.1 L139.7 519.9 L139.4 519.7 L139.1 519.5 L138.7 519.2 L138.2 518.9 L137.8 518.6 L137.3 518.3 L136.8 518.0 L136.3 517.6 L135.7 517.2 L135.1 516.8 L134.5 516.4 L133.8 515.9 L133.0 515.4 L132.2 514.8 L131.3 514.3 L130.3 513.6 L129.3 513.0 L128.2 512.3 L127.1 511.5 L126.0 510.7 L124.7 509.8 L123.4 508.9 L122.0 507.9 L120.5 506.7 L118.9 505.5 L117.3 504.1 L115.7 502.7 L113.9 501.1 L111.9 499.1 L109.8 496.8 L107.6 494.3 L105.2 491.4 L102.6 488.0 L99.8 484.2 L97.0 480.0 L93.9 475.3 L90.6 469.9 L87.2 463.8 L83.5 457.1 L79.7 449.6 L75.6 441.3 L71.2 432.0 L66.6 421.9 L61.8 410.9 L57.0 398.9 L52.2 385.7 L47.4 371.4 L42.6 356.2 L37.8 340.1 L33.1 322.9 L28.4 304.6 L23.9 285.7 L19.8 266.7 L16.1 247.3 L12.6 227.4 L9.6 207.6 L7.2 188.3 L5.4 169.4 L4.2 150.8 L3.6 132.8 L3.7 115.7 L4.6 99.5 L6.3 83.9 L8.7 69.3 L11.9 56.3 L16.0 44.6 L20.9 34.1 L26.5 25.1 L32.5 17.7 L39.1 12.1 L46.3 8.2 L53.9 5.7 L61.6 4.1 L69.5 3.8 L77.8 4.9 L86.1 6.7 L94.4 8.9 L102.8 11.4 L111.2 14.5 L119.5 18.0 L127.7 21.5 L135.8 25.1 L143.6 28.8 L151.4 32.7 L159.2 36.7 L166.8 40.8 L174.4 45.0 L181.9 49.3 L189.3 53.7 L196.8 58.2 L204.3 62.9 L211.7 67.6 L219.1 72.4 L226.5 77.3 L233.9 82.2 L241.2 87.3 L248.6 92.4 L255.9 97.5 L263.2 102.7 L270.6 107.9 L277.9 113.2 L285.3 118.5 L292.7 123.8 L300.0 129.2 L307.4 134.6 L314.7 140.0 L322.0 145.5 L329.4 150.9 L336.7 156.4 L344.0 161.8 L351.3 167.3 L358.5 172.7 L365.8 178.1 L373.0 183.6 L380.1 189.0 L387.2 194.3 L394.3 199.7 L401.3 205.0 L408.3 210.2 L415.2 215.4 L422.0 220.6 L428.8 225.7 L435.5 230.8 L442.1 235.8 L448.6 240.7 L455.0 245.5 L461.3 250.3 L467.5 254.9 L473.6 259.5 L479.5 264.0 L485.3 268.4 L490.9 272.7 L496.4 276.8 L501.6 280.7 L506.6 284.5 L511.5 288.2 L516.2 291.7 L520.8 295.2 L525.3 298.6 L529.5 301.8 L533.6 304.9 L537.5 307.8 L541.2 310.6 L544.8 313.2 L548.1 315.8 L551.3 318.2 L554.3 320.4 L557.2 322.6 L559.9 324.7 L562.4 326.6 L564.8 328.4 L567.1 330.1 L569.3 331.8 L571.3 333.3 L573.2 334.7 L575.0 336.1 L576.7 337.4 L578.4 338.6 L579.9 339.8 L581.4 340.9 L582.7 341.9 L584.1 343.0 L585.4 343.9 L586.6 344.9 L587.8 345.7 L588.8 346.5 L589.8 347.3 L590.8 348.0 L591.9 348.9 L593.3 349.9 L594.8 351.0 L596.3 352.2 L597.6 353.2 L598.6 353.9 L599.5 354.5 L600.2 355.1 L600.9 355.7 L601.7 356.2 L602.5 356.8 L603.2 357.3 L603.7 357.8 L604.1 358.1 L604.4 358.3 L604.6 358.5 L604.8 358.6 L604.8 358.6 Z')"></div><div class="r" style="left:0;top:0;width:692px;height:524px;background:radial-gradient(circle at 257.7px 318.9px, rgba(255,255,255,1) 0px, rgba(255,255,255,0.55) 22px, rgba(255,255,255,0.2) 60px, rgba(255,255,255,0) 110px),conic-gradient(from -9.9deg at 257.7px 318.9px, #00ff00 0deg, #ffff00 48.5deg, #ff0000 100.9deg, #ff00ff 180deg, #0000ff 228.5deg, #00ffff 281deg, #00ff00 360deg);clip-path:polygon(559.8px 324.5px,218.5px 93.8px,123.9px 486.6px)"></div></div><div class="r" style="left:1603px;top:155px;width:232px;height:196px;overflow:hidden"><div class="r" style="left:0;top:0;width:232px;height:196px;background:linear-gradient(135deg,#6a9400,#9a9000 50%,#a07000);clip-path:path('M-1107.1 2178.7 L-1107.1 2178.7 L-1107.2 2178.7 L-1107.2 2178.7 L-1107.3 2178.7 L-1107.3 2178.7 L-1107.4 2178.7 L-1107.5 2178.7 L-1107.6 2178.7 L-1107.7 2178.8 L-1107.8 2178.8 L-1107.9 2178.9 L-1108.0 2178.9 L-1108.1 2179.0 L-1108.3 2179.0 L-1108.4 2179.1 L-1108.5 2179.1 L-1108.6 2179.1 L-1108.7 2179.1 L-1108.8 2179.1 L-1108.9 2179.1 L-1109.0 2179.1 L-1109.2 2179.1 L-1109.3 2179.1 L-1109.4 2179.1 L-1109.6 2179.2 L-1109.7 2179.2 L-1109.9 2179.3 L-1110.1 2179.3 L-1110.3 2179.4 L-1110.5 2179.4 L-1110.6 2179.5 L-1110.8 2179.5 L-1111.0 2179.5 L-1111.2 2179.5 L-1111.3 2179.5 L-1111.5 2179.5 L-1111.7 2179.5 L-1111.8 2179.5 L-1112.0 2179.5 L-1112.2 2179.5 L-1112.4 2179.5 L-1112.6 2179.5 L-1112.8 2179.5 L-1113.1 2179.5 L-1113.3 2179.5 L-1113.6 2179.5 L-1113.8 2179.5 L-1114.1 2179.5 L-1114.3 2179.5 L-1114.6 2179.5 L-1114.9 2179.6 L-1115.1 2179.6 L-1115.4 2179.6 L-1115.7 2179.6 L-1116.0 2179.6 L-1116.4 2179.5 L-1116.7 2179.4 L-1117.1 2179.3 L-1117.5 2179.2 L-1117.8 2179.1 L-1118.2 2179.0 L-1118.7 2178.8 L-1119.1 2178.6 L-1119.6 2178.3 L-1120.2 2178.1 L-1120.7 2177.8 L-1121.3 2177.5 L-1122.0 2177.2 L-1122.6 2176.8 L-1123.3 2176.4 L-1124.0 2176.0 L-1124.7 2175.6 L-1125.5 2175.2 L-1126.2 2174.7 L-1126.9 2174.2 L-1127.7 2173.7 L-1128.5 2173.1 L-1129.4 2172.6 L-1130.3 2172.0 L-1131.2 2171.3 L-1132.2 2170.6 L-1133.3 2169.8 L-1134.4 2169.1 L-1135.6 2168.3 L-1136.7 2167.4 L-1138.0 2166.5 L-1139.2 2165.6 L-1140.5 2164.6 L-1141.8 2163.6 L-1143.2 2162.6 L-1144.5 2161.5 L-1145.9 2160.4 L-1147.4 2159.3 L-1148.9 2158.1 L-1150.5 2156.9 L-1152.1 2155.6 L-1153.8 2154.3 L-1155.5 2153.0 L-1157.3 2151.7 L-1159.2 2150.3 L-1161.1 2148.9 L-1163.1 2147.4 L-1165.2 2145.9 L-1167.4 2144.2 L-1169.7 2142.5 L-1172.1 2140.8 L-1174.6 2139.0 L-1177.2 2137.1 L-1179.9 2135.2 L-1182.6 2133.2 L-1185.4 2131.1 L-1188.3 2129.0 L-1191.3 2126.8 L-1194.3 2124.5 L-1197.4 2122.3 L-1200.6 2119.9 L-1203.8 2117.5 L-1207.2 2114.9 L-1210.7 2112.2 L-1214.3 2109.4 L-1218.0 2106.4 L-1221.8 2103.3 L-1225.7 2100.2 L-1229.7 2096.9 L-1233.8 2093.5 L-1238.0 2089.8 L-1242.3 2086.0 L-1246.8 2081.9 L-1251.3 2077.7 L-1255.8 2073.5 L-1260.5 2069.2 L-1265.2 2064.6 L-1270.1 2059.7 L-1275.2 2054.3 L-1280.6 2048.5 L-1286.2 2041.9 L-1292.1 2034.9 L-1298.1 2027.5 L-1304.4 2019.7 L-1310.9 2011.5 L-1317.6 2002.6 L-1324.6 1993.1 L-1331.7 1982.8 L-1339.1 1971.8 L-1346.7 1960.1 L-1354.5 1948.0 L-1362.5 1935.2 L-1370.7 1921.8 L-1379.2 1907.5 L-1388.0 1892.2 L-1397.0 1875.8 L-1406.4 1858.1 L-1416.0 1839.4 L-1425.9 1819.8 L-1436.1 1799.3 L-1446.5 1777.7 L-1457.2 1754.9 L-1468.3 1730.8 L-1479.6 1705.2 L-1491.3 1678.2 L-1503.4 1649.7 L-1516.0 1620.0 L-1529.0 1589.1 L-1542.3 1556.7 L-1555.7 1522.9 L-1569.2 1487.5 L-1582.8 1450.4 L-1596.2 1411.6 L-1609.6 1370.9 L-1623.1 1328.6 L-1636.7 1284.6 L-1650.4 1238.9 L-1664.1 1191.8 L-1677.6 1143.2 L-1691.0 1093.2 L-1704.3 1041.9 L-1717.5 988.9 L-1730.9 933.8 L-1744.2 877.0 L-1757.4 818.9 L-1770.3 759.9 L-1782.8 700.3 L-1794.7 640.4 L-1805.9 580.6 L-1816.6 520.2 L-1827.0 458.7 L-1837.0 396.5 L-1846.5 333.9 L-1855.3 271.3 L-1863.4 209.2 L-1870.7 147.9 L-1876.9 87.8 L-1882.3 28.5 L-1887.0 -30.8 L-1891.0 -89.6 L-1894.2 -147.8 L-1896.5 -205.0 L-1897.7 -261.1 L-1897.9 -315.6 L-1896.8 -368.5 L-1894.7 -420.1 L-1891.5 -470.8 L-1887.4 -520.5 L-1882.1 -568.8 L-1875.8 -615.5 L-1868.5 -660.1 L-1860.0 -702.6 L-1850.4 -742.4 L-1839.6 -780.1 L-1827.5 -815.9 L-1814.2 -849.8 L-1799.8 -881.6 L-1784.5 -911.1 L-1768.5 -938.3 L-1751.7 -962.8 L-1734.4 -984.7 L-1716.4 -1003.7 L-1697.3 -1019.8 L-1677.3 -1033.3 L-1656.6 -1044.4 L-1635.4 -1053.4 L-1613.8 -1060.6 L-1592.0 -1066.1 L-1570.2 -1070.2 L-1548.1 -1072.3 L-1525.4 -1072.0 L-1502.4 -1069.6 L-1479.1 -1065.6 L-1455.6 -1060.3 L-1432.0 -1054.0 L-1408.5 -1047.3 L-1385.0 -1040.4 L-1361.6 -1032.9 L-1338.0 -1024.3 L-1314.3 -1014.9 L-1290.6 -1004.7 L-1266.9 -994.0 L-1243.4 -983.0 L-1220.1 -971.8 L-1197.1 -960.8 L-1174.4 -949.7 L-1151.9 -938.4 L-1129.6 -926.7 L-1107.4 -914.9 L-1085.4 -902.8 L-1063.4 -890.5 L-1041.6 -878.1 L-1019.9 -865.5 L-998.2 -852.8 L-976.8 -839.9 L-955.4 -826.7 L-934.1 -813.4 L-913.0 -799.9 L-891.8 -786.3 L-870.7 -772.5 L-849.6 -758.5 L-828.5 -744.4 L-807.4 -730.0 L-786.3 -715.5 L-765.3 -700.9 L-744.4 -686.1 L-723.4 -671.1 L-702.5 -656.1 L-681.6 -640.9 L-660.8 -625.7 L-639.9 -610.2 L-619.2 -594.7 L-598.4 -579.0 L-577.7 -563.3 L-557.0 -547.4 L-536.2 -531.5 L-515.5 -515.5 L-494.8 -499.4 L-474.1 -483.2 L-453.4 -467.0 L-432.7 -450.6 L-412.0 -434.2 L-391.3 -417.7 L-370.6 -401.1 L-349.9 -384.6 L-329.1 -367.9 L-308.3 -351.2 L-287.6 -334.4 L-266.8 -317.5 L-246.0 -300.6 L-225.2 -283.6 L-204.5 -266.7 L-183.7 -249.7 L-163.0 -232.7 L-142.4 -215.6 L-121.7 -198.5 L-101.0 -181.4 L-80.4 -164.3 L-59.8 -147.1 L-39.2 -130.0 L-18.6 -112.9 L2.0 -95.8 L22.6 -78.7 L43.2 -61.5 L63.8 -44.4 L84.4 -27.3 L104.9 -10.2 L125.3 6.9 L145.7 23.9 L166.0 40.9 L186.3 57.9 L206.5 74.9 L226.7 91.9 L246.8 108.8 L266.9 125.6 L286.8 142.4 L306.7 159.2 L326.5 175.8 L346.3 192.5 L366.0 209.0 L385.6 225.6 L405.1 242.0 L424.5 258.4 L443.9 274.7 L463.1 290.9 L482.2 307.0 L501.2 323.0 L520.1 338.9 L539.0 354.8 L557.7 370.6 L576.2 386.2 L594.7 401.7 L612.9 417.1 L631.1 432.3 L649.1 447.5 L667.0 462.5 L684.8 477.4 L702.4 492.1 L719.8 506.7 L737.0 521.2 L754.0 535.5 L770.8 549.6 L787.4 563.6 L803.8 577.5 L820.1 591.3 L836.1 604.8 L851.9 618.2 L867.3 631.2 L882.5 644.1 L897.4 656.6 L912.0 668.9 L926.3 680.9 L940.3 692.7 L954.1 704.3 L967.7 715.8 L981.1 727.0 L994.4 738.1 L1007.4 749.1 L1020.3 760.0 L1033.0 770.6 L1045.4 781.1 L1057.6 791.4 L1069.6 801.5 L1081.3 811.3 L1092.7 820.8 L1103.8 830.2 L1114.7 839.2 L1125.2 848.0 L1135.6 856.6 L1145.6 865.0 L1155.4 873.2 L1165.0 881.2 L1174.4 889.1 L1183.5 896.7 L1192.4 904.2 L1201.0 911.5 L1209.4 918.6 L1217.5 925.5 L1225.5 932.2 L1233.2 938.7 L1240.7 945.1 L1248.1 951.3 L1255.2 957.3 L1262.0 963.1 L1268.7 968.8 L1275.2 974.2 L1281.5 979.6 L1287.6 984.7 L1293.6 989.8 L1299.5 994.7 L1305.1 999.4 L1310.6 1004.0 L1315.9 1008.4 L1321.1 1012.8 L1326.1 1016.9 L1331.1 1021.1 L1335.9 1025.1 L1340.5 1029.0 L1345.0 1032.8 L1349.4 1036.5 L1353.7 1040.1 L1357.8 1043.6 L1361.8 1047.0 L1365.8 1050.4 L1369.7 1053.7 L1373.6 1056.9 L1377.3 1060.1 L1381.0 1063.2 L1384.5 1066.2 L1388.0 1069.2 L1391.4 1072.0 L1394.8 1074.9 L1398.0 1077.6 L1401.1 1080.2 L1404.0 1082.6 L1406.7 1084.9 L1409.4 1087.2 L1412.1 1089.5 L1414.9 1091.9 L1417.9 1094.4 L1421.2 1097.2 L1424.9 1100.3 L1429.0 1103.7 L1433.3 1107.3 L1437.8 1111.0 L1442.1 1114.6 L1446.4 1118.1 L1450.3 1121.4 L1453.7 1124.3 L1456.7 1126.8 L1459.4 1129.0 L1461.8 1131.1 L1464.0 1133.0 L1466.1 1134.7 L1468.2 1136.4 L1470.2 1138.2 L1472.3 1139.9 L1474.4 1141.8 L1476.6 1143.6 L1478.8 1145.5 L1480.9 1147.3 L1483.0 1149.0 L1484.9 1150.6 L1486.6 1152.0 L1488.0 1153.3 L1489.3 1154.3 L1490.4 1155.2 L1491.3 1156.0 L1492.1 1156.6 L1492.7 1157.2 L1493.2 1157.6 L1493.7 1158.0 L1494.1 1158.4 Z')"></div><div class="r" style="left:0;top:0;width:232px;height:196px;background:linear-gradient(160deg,#b8ff00 0%,#f0ff00 40%,#ffff00 55%,#ffc800 100%);clip-path:polygon(1240.3px 943.9px,-685.3px -506.5px,-1218.9px 1963.1px)"></div></div><canvas id="cie" class="r" style="left:1151px;top:147px" width="692" height="524"></canvas><canvas id="zoom" class="r" style="left:1603px;top:155px" width="232" height="196"></canvas><svg class="r" style="left:1100px;top:100px" width="760" height="620" viewBox="1100 100 760 620"><rect x="1151.5" y="147.5" width="691" height="523" fill="none" stroke="#a8a8a8" stroke-width="1.5"/><line x1="1145" y1="671.0" x2="1151" y2="671.0" stroke="#b0b0b0" stroke-width="1.2"/><line x1="1151.5" y1="671" x2="1151.5" y2="677" stroke="#b0b0b0" stroke-width="1.2"/><line x1="1145" y1="608.6" x2="1151" y2="608.6" stroke="#b0b0b0" stroke-width="1.2"/><line x1="1233.8" y1="671" x2="1233.8" y2="677" stroke="#b0b0b0" stroke-width="1.2"/><line x1="1145" y1="546.3" x2="1151" y2="546.3" stroke="#b0b0b0" stroke-width="1.2"/><line x1="1316.0" y1="671" x2="1316.0" y2="677" stroke="#b0b0b0" stroke-width="1.2"/><line x1="1145" y1="483.9" x2="1151" y2="483.9" stroke="#b0b0b0" stroke-width="1.2"/><line x1="1398.2" y1="671" x2="1398.2" y2="677" stroke="#b0b0b0" stroke-width="1.2"/><line x1="1145" y1="421.6" x2="1151" y2="421.6" stroke="#b0b0b0" stroke-width="1.2"/><line x1="1480.5" y1="671" x2="1480.5" y2="677" stroke="#b0b0b0" stroke-width="1.2"/><line x1="1145" y1="359.2" x2="1151" y2="359.2" stroke="#b0b0b0" stroke-width="1.2"/><line x1="1562.8" y1="671" x2="1562.8" y2="677" stroke="#b0b0b0" stroke-width="1.2"/><line x1="1145" y1="296.9" x2="1151" y2="296.9" stroke="#b0b0b0" stroke-width="1.2"/><line x1="1645.0" y1="671" x2="1645.0" y2="677" stroke="#b0b0b0" stroke-width="1.2"/><line x1="1145" y1="234.5" x2="1151" y2="234.5" stroke="#b0b0b0" stroke-width="1.2"/><line x1="1727.2" y1="671" x2="1727.2" y2="677" stroke="#b0b0b0" stroke-width="1.2"/><line x1="1145" y1="172.2" x2="1151" y2="172.2" stroke="#b0b0b0" stroke-width="1.2"/><line x1="1809.5" y1="671" x2="1809.5" y2="677" stroke="#b0b0b0" stroke-width="1.2"/><rect x="1602.5" y="154.5" width="233" height="197" fill="none" stroke="#a8a8a8" stroke-width="1.5"/><rect x="1362.0" y="231.6" width="14" height="14" fill="none" stroke="#f4f4f4" stroke-width="1.8"/><rect x="1396.8" y="358.3" width="14" height="14" fill="none" stroke="#f4f4f4" stroke-width="1.8"/><rect x="1452.9" y="351.5" width="14" height="14" fill="none" stroke="#f4f4f4" stroke-width="1.8"/><rect x="1504.3" y="327.6" width="14" height="14" fill="none" stroke="#f4f4f4" stroke-width="1.8"/><rect x="1511.5" y="366.0" width="14" height="14" fill="none" stroke="#f4f4f4" stroke-width="1.8"/><rect x="1532.3" y="385.8" width="14" height="14" fill="none" stroke="#f4f4f4" stroke-width="1.8"/><rect x="1421.7" y="395.1" width="14" height="14" fill="none" stroke="#f4f4f4" stroke-width="1.8"/><rect x="1564.0" y="408.6" width="14" height="14" fill="none" stroke="#f4f4f4" stroke-width="1.8"/><rect x="1359.4" y="440.3" width="14" height="14" fill="none" stroke="#f4f4f4" stroke-width="1.8"/><rect x="1455.0" y="441.8" width="14" height="14" fill="none" stroke="#f4f4f4" stroke-width="1.8"/><rect x="1472.6" y="437.7" width="14" height="14" fill="none" stroke="#f4f4f4" stroke-width="1.8"/><rect x="1308.0" y="455.3" width="14" height="14" fill="none" stroke="#f4f4f4" stroke-width="1.8"/><rect x="1518.8" y="466.7" width="14" height="14" fill="none" stroke="#f4f4f4" stroke-width="1.8"/><rect x="1586.8" y="462.0" width="14" height="14" fill="none" stroke="#f4f4f4" stroke-width="1.8"/><rect x="1702.5" y="462.0" width="14" height="14" fill="none" stroke="#f4f4f4" stroke-width="1.8"/><rect x="1307.0" y="496.9" width="14" height="14" fill="none" stroke="#f4f4f4" stroke-width="1.8"/><rect x="1347.5" y="495.3" width="14" height="14" fill="none" stroke="#f4f4f4" stroke-width="1.8"/><rect x="1363.6" y="504.6" width="14" height="14" fill="none" stroke="#f4f4f4" stroke-width="1.8"/><rect x="1379.7" y="523.3" width="14" height="14" fill="none" stroke="#f4f4f4" stroke-width="1.8"/><rect x="1450.8" y="510.9" width="14" height="14" fill="none" stroke="#f4f4f4" stroke-width="1.8"/><rect x="1320.5" y="542.5" width="14" height="14" fill="none" stroke="#f4f4f4" stroke-width="1.8"/><rect x="1302.9" y="573.7" width="14" height="14" fill="none" stroke="#f4f4f4" stroke-width="1.8"/><rect x="1420.7" y="568.5" width="14" height="14" fill="none" stroke="#f4f4f4" stroke-width="1.8"/><rect x="1266.5" y="625.0" width="14" height="14" fill="none" stroke="#f4f4f4" stroke-width="1.8"/><rect x="1401" y="458.4" width="14" height="14" fill="none" stroke="#000" stroke-width="2"/><circle cx="1363.3" cy="235" r="5" fill="#30e030" stroke="#151515" stroke-width="1.7"/><circle cx="1398.6" cy="349.2" r="5" fill="#607050" stroke="#151515" stroke-width="1.7"/><circle cx="1460.4" cy="349.2" r="5" fill="#909870" stroke="#151515" stroke-width="1.7"/><circle cx="1506.5" cy="333.2" r="5" fill="#e8e020" stroke="#151515" stroke-width="1.7"/><circle cx="1523.2" cy="368.4" r="5" fill="#c0a050" stroke="#151515" stroke-width="1.7"/><circle cx="1545" cy="387" r="5" fill="#b08040" stroke="#151515" stroke-width="1.7"/><circle cx="1427.2" cy="391.2" r="5" fill="#506040" stroke="#151515" stroke-width="1.7"/><circle cx="1582.4" cy="412" r="5" fill="#b07050" stroke="#151515" stroke-width="1.7"/><circle cx="1357.6" cy="452" r="5" fill="#909090" stroke="#151515" stroke-width="1.7"/><circle cx="1460.4" cy="450.4" r="5" fill="#a08878" stroke="#151515" stroke-width="1.7"/><circle cx="1494.1" cy="443.6" r="5" fill="#704848" stroke="#151515" stroke-width="1.7"/><circle cx="1402.3" cy="469" r="5" fill="#a0a0a0" stroke="#151515" stroke-width="1.7"/><circle cx="1311.4" cy="469" r="5" fill="#40e0e0" stroke="#151515" stroke-width="1.7"/><circle cx="1537.2" cy="476.9" r="5" fill="#905050" stroke="#151515" stroke-width="1.7"/><circle cx="1622.9" cy="470.6" r="5" fill="#904040" stroke="#151515" stroke-width="1.7"/><circle cx="1705.9" cy="469.6" r="5" fill="#ff1010" stroke="#151515" stroke-width="1.7"/><circle cx="1304.2" cy="517.3" r="5" fill="#406080" stroke="#151515" stroke-width="1.7"/><circle cx="1344.6" cy="514.2" r="5" fill="#607080" stroke="#151515" stroke-width="1.7"/><circle cx="1362.3" cy="521.5" r="5" fill="#7080a0" stroke="#151515" stroke-width="1.7"/><circle cx="1456.8" cy="525.7" r="5" fill="#a06090" stroke="#151515" stroke-width="1.7"/><circle cx="1376.3" cy="549" r="5" fill="#604060" stroke="#151515" stroke-width="1.7"/><circle cx="1315.6" cy="566.7" r="5" fill="#405090" stroke="#151515" stroke-width="1.7"/><circle cx="1420.4" cy="578.1" r="5" fill="#e030e0" stroke="#151515" stroke-width="1.7"/><circle cx="1295.9" cy="600.9" r="5" fill="#403080" stroke="#151515" stroke-width="1.7"/><circle cx="1423" cy="446.5" r="5.2" fill="#000"/><circle cx="1276.6" cy="632" r="5" fill="#1010ff" stroke="#0000a0" stroke-width="1"/><circle cx="1695.8" cy="234.1" r="4.6" fill="none" stroke="#111" stroke-width="1.6"/><rect x="1710.5" y="244" width="15" height="15" fill="none" stroke="#f4f4f4" stroke-width="1.8"/></svg><div class="t" style="left:1136.94px;top:664.03px;font-size:14.5px;line-height:14.5px;color:#d8d8d8;">0</div><div class="t" style="left:1147.47px;top:681.53px;font-size:14.5px;line-height:14.5px;color:#d8d8d8;">0</div><div class="t" style="left:1124.84px;top:601.68px;font-size:14.5px;line-height:14.5px;color:#d8d8d8;">0,1</div><div class="t" style="left:1223.67px;top:681.53px;font-size:14.5px;line-height:14.5px;color:#d8d8d8;">0,1</div><div class="t" style="left:1124.84px;top:539.33px;font-size:14.5px;line-height:14.5px;color:#d8d8d8;">0,2</div><div class="t" style="left:1305.92px;top:681.53px;font-size:14.5px;line-height:14.5px;color:#d8d8d8;">0,2</div><div class="t" style="left:1124.84px;top:476.98px;font-size:14.5px;line-height:14.5px;color:#d8d8d8;">0,3</div><div class="t" style="left:1388.17px;top:681.53px;font-size:14.5px;line-height:14.5px;color:#d8d8d8;">0,3</div><div class="t" style="left:1124.84px;top:414.63px;font-size:14.5px;line-height:14.5px;color:#d8d8d8;">0,4</div><div class="t" style="left:1470.42px;top:681.53px;font-size:14.5px;line-height:14.5px;color:#d8d8d8;">0,4</div><div class="t" style="left:1124.84px;top:352.28px;font-size:14.5px;line-height:14.5px;color:#d8d8d8;">0,5</div><div class="t" style="left:1552.67px;top:681.53px;font-size:14.5px;line-height:14.5px;color:#d8d8d8;">0,5</div><div class="t" style="left:1124.84px;top:289.93px;font-size:14.5px;line-height:14.5px;color:#d8d8d8;">0,6</div><div class="t" style="left:1634.92px;top:681.53px;font-size:14.5px;line-height:14.5px;color:#d8d8d8;">0,6</div><div class="t" style="left:1124.84px;top:227.58px;font-size:14.5px;line-height:14.5px;color:#d8d8d8;">0,7</div><div class="t" style="left:1717.17px;top:681.53px;font-size:14.5px;line-height:14.5px;color:#d8d8d8;">0,7</div><div class="t" style="left:1124.84px;top:165.23px;font-size:14.5px;line-height:14.5px;color:#d8d8d8;">0,8</div><div class="t" style="left:1799.42px;top:681.53px;font-size:14.5px;line-height:14.5px;color:#d8d8d8;">0,8</div><div class="r" style="left:1570px;top:636px;width:271px;height:30px;background:#333333"></div><div class="t" style="left:1570.00px;top:641.68px;font-size:22px;line-height:22px;color:#f4f4f4;transform:scaleX(0.9554);transform-origin:0 0;">RGB Triplet: 255, 255, 0</div><script>
(function(){
var L=[[0.17410,0.00500],[0.17409,0.00500],[0.17408,0.00500],[0.17407,0.00500],[0.17406,0.00501],[0.17405,0.00501],[0.17403,0.00501],[0.17402,0.00500],[0.17400,0.00500],[0.17398,0.00499],[0.17396,0.00498],[0.17393,0.00497],[0.17391,0.00495],[0.17388,0.00493],[0.17385,0.00492],[0.17383,0.00491],[0.17380,0.00490],[0.17378,0.00490],[0.17375,0.00490],[0.17373,0.00490],[0.17371,0.00490],[0.17368,0.00490],[0.17366,0.00490],[0.17363,0.00490],[0.17360,0.00490],[0.17357,0.00489],[0.17353,0.00488],[0.17349,0.00487],[0.17346,0.00485],[0.17342,0.00483],[0.17338,0.00482],[0.17334,0.00481],[0.17330,0.00480],[0.17326,0.00480],[0.17323,0.00479],[0.17319,0.00479],[0.17316,0.00479],[0.17312,0.00480],[0.17308,0.00480],[0.17304,0.00480],[0.17300,0.00480],[0.17296,0.00480],[0.17291,0.00480],[0.17286,0.00480],[0.17281,0.00480],[0.17276,0.00480],[0.17271,0.00480],[0.17266,0.00480],[0.17260,0.00480],[0.17254,0.00480],[0.17249,0.00479],[0.17243,0.00479],[0.17237,0.00478],[0.17231,0.00478],[0.17224,0.00478],[0.17217,0.00479],[0.17210,0.00480],[0.17202,0.00482],[0.17195,0.00484],[0.17187,0.00487],[0.17179,0.00491],[0.17170,0.00495],[0.17161,0.00499],[0.17151,0.00504],[0.17140,0.00510],[0.17128,0.00517],[0.17116,0.00524],[0.17103,0.00532],[0.17089,0.00540],[0.17075,0.00549],[0.17061,0.00559],[0.17045,0.00569],[0.17030,0.00580],[0.17014,0.00591],[0.16999,0.00603],[0.16982,0.00616],[0.16966,0.00629],[0.16948,0.00643],[0.16930,0.00657],[0.16911,0.00673],[0.16890,0.00690],[0.16868,0.00708],[0.16845,0.00727],[0.16822,0.00747],[0.16797,0.00767],[0.16771,0.00789],[0.16745,0.00812],[0.16718,0.00835],[0.16690,0.00860],[0.16662,0.00885],[0.16633,0.00912],[0.16603,0.00939],[0.16573,0.00968],[0.16542,0.00997],[0.16509,0.01027],[0.16475,0.01058],[0.16440,0.01090],[0.16403,0.01123],[0.16366,0.01156],[0.16327,0.01190],[0.16287,0.01225],[0.16246,0.01261],[0.16203,0.01299],[0.16158,0.01339],[0.16110,0.01380],[0.16060,0.01423],[0.16009,0.01468],[0.15955,0.01514],[0.15899,0.01562],[0.15842,0.01611],[0.15783,0.01662],[0.15722,0.01715],[0.15660,0.01770],[0.15596,0.01826],[0.15531,0.01883],[0.15464,0.01941],[0.15396,0.02001],[0.15325,0.02063],[0.15252,0.02128],[0.15177,0.02197],[0.15100,0.02270],[0.15020,0.02346],[0.14938,0.02423],[0.14854,0.02504],[0.14768,0.02588],[0.14680,0.02675],[0.14589,0.02768],[0.14496,0.02866],[0.14400,0.02970],[0.14303,0.03077],[0.14205,0.03184],[0.14105,0.03295],[0.14002,0.03412],[0.13897,0.03537],[0.13786,0.03673],[0.13671,0.03823],[0.13550,0.03990],[0.13423,0.04169],[0.13293,0.04357],[0.13157,0.04556],[0.13018,0.04767],[0.12873,0.04994],[0.12724,0.05236],[0.12569,0.05498],[0.12410,0.05780],[0.12246,0.06078],[0.12078,0.06387],[0.11906,0.06712],[0.11728,0.07055],[0.11545,0.07420],[0.11356,0.07810],[0.11162,0.08229],[0.10960,0.08680],[0.10752,0.09158],[0.10539,0.09657],[0.10320,0.10180],[0.10096,0.10731],[0.09864,0.11313],[0.09627,0.11928],[0.09382,0.12579],[0.09130,0.13270],[0.08869,0.13996],[0.08597,0.14753],[0.08317,0.15543],[0.08031,0.16367],[0.07742,0.17230],[0.07450,0.18133],[0.07159,0.19079],[0.06870,0.20070],[0.06581,0.21107],[0.06289,0.22188],[0.05995,0.23311],[0.05701,0.24474],[0.05407,0.25677],[0.05114,0.26916],[0.04825,0.28191],[0.04540,0.29500],[0.04255,0.30854],[0.03967,0.32259],[0.03679,0.33707],[0.03395,0.35189],[0.03117,0.36695],[0.02848,0.38216],[0.02591,0.39744],[0.02350,0.41270],[0.02120,0.42809],[0.01895,0.44378],[0.01680,0.45966],[0.01475,0.47563],[0.01284,0.49159],[0.01110,0.50744],[0.00954,0.52308],[0.00820,0.53840],[0.00704,0.55354],[0.00602,0.56865],[0.00515,0.58365],[0.00447,0.59849],[0.00398,0.61310],[0.00371,0.62739],[0.00368,0.64132],[0.00390,0.65480],[0.00436,0.66796],[0.00504,0.68091],[0.00594,0.69359],[0.00707,0.70591],[0.00842,0.71781],[0.01001,0.72920],[0.01183,0.74003],[0.01390,0.75020],[0.01624,0.75981],[0.01885,0.76895],[0.02172,0.77759],[0.02481,0.78570],[0.02810,0.79323],[0.03157,0.80015],[0.03517,0.80642],[0.03890,0.81200],[0.04280,0.81684],[0.04691,0.82095],[0.05122,0.82440],[0.05567,0.82724],[0.06024,0.82954],[0.06489,0.83135],[0.06959,0.83276],[0.07430,0.83380],[0.07907,0.83434],[0.08394,0.83426],[0.08891,0.83366],[0.09393,0.83263],[0.09900,0.83127],[0.10408,0.82968],[0.10915,0.82796],[0.11420,0.82620],[0.11925,0.82430],[0.12434,0.82211],[0.12944,0.81969],[0.13456,0.81709],[0.13965,0.81436],[0.14472,0.81155],[0.14974,0.80872],[0.15470,0.80590],[0.15960,0.80307],[0.16445,0.80018],[0.16926,0.79721],[0.17404,0.79419],[0.17879,0.79111],[0.18351,0.78798],[0.18821,0.78481],[0.19290,0.78160],[0.19756,0.77835],[0.20219,0.77505],[0.20679,0.77170],[0.21137,0.76831],[0.21594,0.76487],[0.22050,0.76139],[0.22505,0.75786],[0.22960,0.75430],[0.23415,0.75069],[0.23869,0.74704],[0.24323,0.74334],[0.24776,0.73959],[0.25228,0.73582],[0.25679,0.73200],[0.26130,0.72816],[0.26580,0.72430],[0.27029,0.72041],[0.27478,0.71647],[0.27926,0.71251],[0.28373,0.70851],[0.28820,0.70449],[0.29267,0.70045],[0.29713,0.69638],[0.30160,0.69230],[0.30607,0.68820],[0.31053,0.68407],[0.31499,0.67992],[0.31945,0.67575],[0.32391,0.67156],[0.32837,0.66735],[0.33283,0.66313],[0.33730,0.65890],[0.34177,0.65465],[0.34625,0.65038],[0.35073,0.64610],[0.35521,0.64179],[0.35969,0.63748],[0.36416,0.63316],[0.36863,0.62883],[0.37310,0.62450],[0.37756,0.62016],[0.38202,0.61581],[0.38647,0.61145],[0.39093,0.60708],[0.39537,0.60271],[0.39982,0.59834],[0.40426,0.59397],[0.40870,0.58960],[0.41314,0.58523],[0.41758,0.58087],[0.42202,0.57649],[0.42646,0.57212],[0.43089,0.56776],[0.43530,0.56340],[0.43971,0.55904],[0.44410,0.55470],[0.44848,0.55036],[0.45285,0.54603],[0.45721,0.54169],[0.46156,0.53737],[0.46589,0.53305],[0.47021,0.52875],[0.47452,0.52447],[0.47880,0.52020],[0.48307,0.51595],[0.48733,0.51170],[0.49157,0.50747],[0.49580,0.50326],[0.50001,0.49906],[0.50420,0.49488],[0.50836,0.49073],[0.51250,0.48660],[0.51662,0.48249],[0.52072,0.47840],[0.52480,0.47433],[0.52886,0.47029],[0.53289,0.46627],[0.53689,0.46228],[0.54086,0.45832],[0.54480,0.45440],[0.54871,0.45051],[0.55260,0.44665],[0.55646,0.44282],[0.56029,0.43902],[0.56408,0.43525],[0.56783,0.43153],[0.57154,0.42784],[0.57520,0.42420],[0.57882,0.42059],[0.58240,0.41701],[0.58594,0.41347],[0.58944,0.40996],[0.59289,0.40651],[0.59629,0.40311],[0.59963,0.39977],[0.60290,0.39650],[0.60610,0.39330],[0.60925,0.39017],[0.61233,0.38710],[0.61536,0.38409],[0.61833,0.38112],[0.62126,0.37821],[0.62415,0.37534],[0.62700,0.37250],[0.62981,0.36970],[0.63259,0.36693],[0.63532,0.36421],[0.63801,0.36154],[0.64064,0.35891],[0.64322,0.35635],[0.64574,0.35384],[0.64820,0.35140],[0.65059,0.34903],[0.65293,0.34672],[0.65521,0.34447],[0.65743,0.34227],[0.65960,0.34014],[0.66172,0.33805],[0.66378,0.33600],[0.66580,0.33400],[0.66777,0.33204],[0.66968,0.33014],[0.67153,0.32828],[0.67334,0.32648],[0.67509,0.32471],[0.67681,0.32300],[0.67847,0.32133],[0.68010,0.31970],[0.68168,0.31812],[0.68321,0.31659],[0.68469,0.31511],[0.68613,0.31367],[0.68752,0.31227],[0.68888,0.31091],[0.69020,0.30959],[0.69150,0.30830],[0.69276,0.30705],[0.69398,0.30584],[0.69516,0.30467],[0.69631,0.30354],[0.69742,0.30245],[0.69851,0.30137],[0.69956,0.30033],[0.70060,0.29930],[0.70161,0.29830],[0.70258,0.29733],[0.70352,0.29639],[0.70444,0.29547],[0.70533,0.29457],[0.70620,0.29370],[0.70706,0.29284],[0.70790,0.29200],[0.70873,0.29117],[0.70954,0.29036],[0.71032,0.28958],[0.71109,0.28881],[0.71185,0.28805],[0.71258,0.28732],[0.71330,0.28660],[0.71400,0.28590],[0.71466,0.28524],[0.71528,0.28462],[0.71587,0.28403],[0.71644,0.28345],[0.71703,0.28287],[0.71764,0.28226],[0.71829,0.28161],[0.71900,0.28090],[0.71980,0.28011],[0.72068,0.27924],[0.72161,0.27832],[0.72256,0.27739],[0.72351,0.27646],[0.72441,0.27557],[0.72525,0.27474],[0.72600,0.27400],[0.72665,0.27336],[0.72722,0.27278],[0.72775,0.27226],[0.72823,0.27178],[0.72868,0.27133],[0.72911,0.27089],[0.72955,0.27045],[0.73000,0.27000],[0.73047,0.26953],[0.73094,0.26906],[0.73141,0.26859],[0.73187,0.26813],[0.73231,0.26769],[0.73271,0.26729],[0.73308,0.26692],[0.73340,0.26660],[0.73367,0.26633],[0.73390,0.26610],[0.73410,0.26590],[0.73426,0.26574],[0.73440,0.26560],[0.73452,0.26548],[0.73461,0.26539],[0.73470,0.26530]];
var TRI=[[0.680,0.320],[0.265,0.690],[0.150,0.060]];
var M=[[2.4934969,-0.9313836,-0.4027108],[-0.8294890,1.7626641,0.0236247],[0.0358458,-0.0761724,0.9568845]];
var GAM=1.4, DIM=0.58;
function col(x,y,out){
  if(y<=0.0005){y=0.0005;}
  var X=x/y, Y=1, Z=(1-x-y)/y;
  var r=M[0][0]*X+M[0][1]*Y+M[0][2]*Z, g=M[1][0]*X+M[1][1]*Y+M[1][2]*Z, b=M[2][0]*X+M[2][1]*Y+M[2][2]*Z;
  if(r<0)r=0; if(g<0)g=0; if(b<0)b=0;
  var m=Math.max(r,g,b); if(m<=0)m=1;
  r/=m; g/=m; b/=m;
  out[0]=Math.pow(r,GAM)*255; out[1]=Math.pow(g,GAM)*255; out[2]=Math.pow(b,GAM)*255;
}
function draw(id, w, h, fx, fy){
  var cv=document.getElementById(id); var ctx=cv.getContext('2d');
  var t1=document.createElement('canvas'); t1.width=w; t1.height=h;
  var t2=document.createElement('canvas'); t2.width=w; t2.height=h;
  var c1=t1.getContext('2d'), c2=t2.getContext('2d');
  var i1=c1.createImageData(w,h), i2=c2.createImageData(w,h); var d1=i1.data, d2=i2.data; var c=[0,0,0];
  for(var j=0;j<h;j++){ for(var i=0;i<w;i++){ var xy=fx(i+0.5,j+0.5); col(xy[0],xy[1],c); var k=(j*w+i)*4;
    d1[k]=c[0]*DIM; d1[k+1]=c[1]*DIM; d1[k+2]=c[2]*DIM; d1[k+3]=255;
    d2[k]=c[0]; d2[k+1]=c[1]; d2[k+2]=c[2]; d2[k+3]=255; } }
  c1.putImageData(i1,0,0); c2.putImageData(i2,0,0);
  ctx.save(); ctx.beginPath();
  for(var n=0;n<L.length;n++){ var p=fy(L[n][0],L[n][1]); if(n==0)ctx.moveTo(p[0],p[1]); else ctx.lineTo(p[0],p[1]); }
  ctx.closePath(); ctx.clip(); ctx.drawImage(t1,0,0);
  ctx.beginPath();
  for(var n=0;n<3;n++){ var p=fy(TRI[n][0],TRI[n][1]); if(n==0)ctx.moveTo(p[0],p[1]); else ctx.lineTo(p[0],p[1]); }
  ctx.closePath(); ctx.clip(); ctx.drawImage(t2,0,0);
  ctx.restore();
}
draw('cie',692,524,function(i,j){return [(1151+i-1151.5)/822.5, (671.0-(147+j))/623.5];}, function(x,y){return [1151.5+x*822.5-1151, 671.0-y*623.5-147];});
var TX=0.4377, TY=0.5358, HW=0.025;
draw('zoom',232,196,function(i,j){return [TX-HW+i/232*2*HW, TY+HW-j/196*2*HW];}, function(x,y){return [(x-(TX-HW))/(2*HW)*232, (TY+HW-y)/(2*HW)*196];});
})();
</script>
</body></html>
